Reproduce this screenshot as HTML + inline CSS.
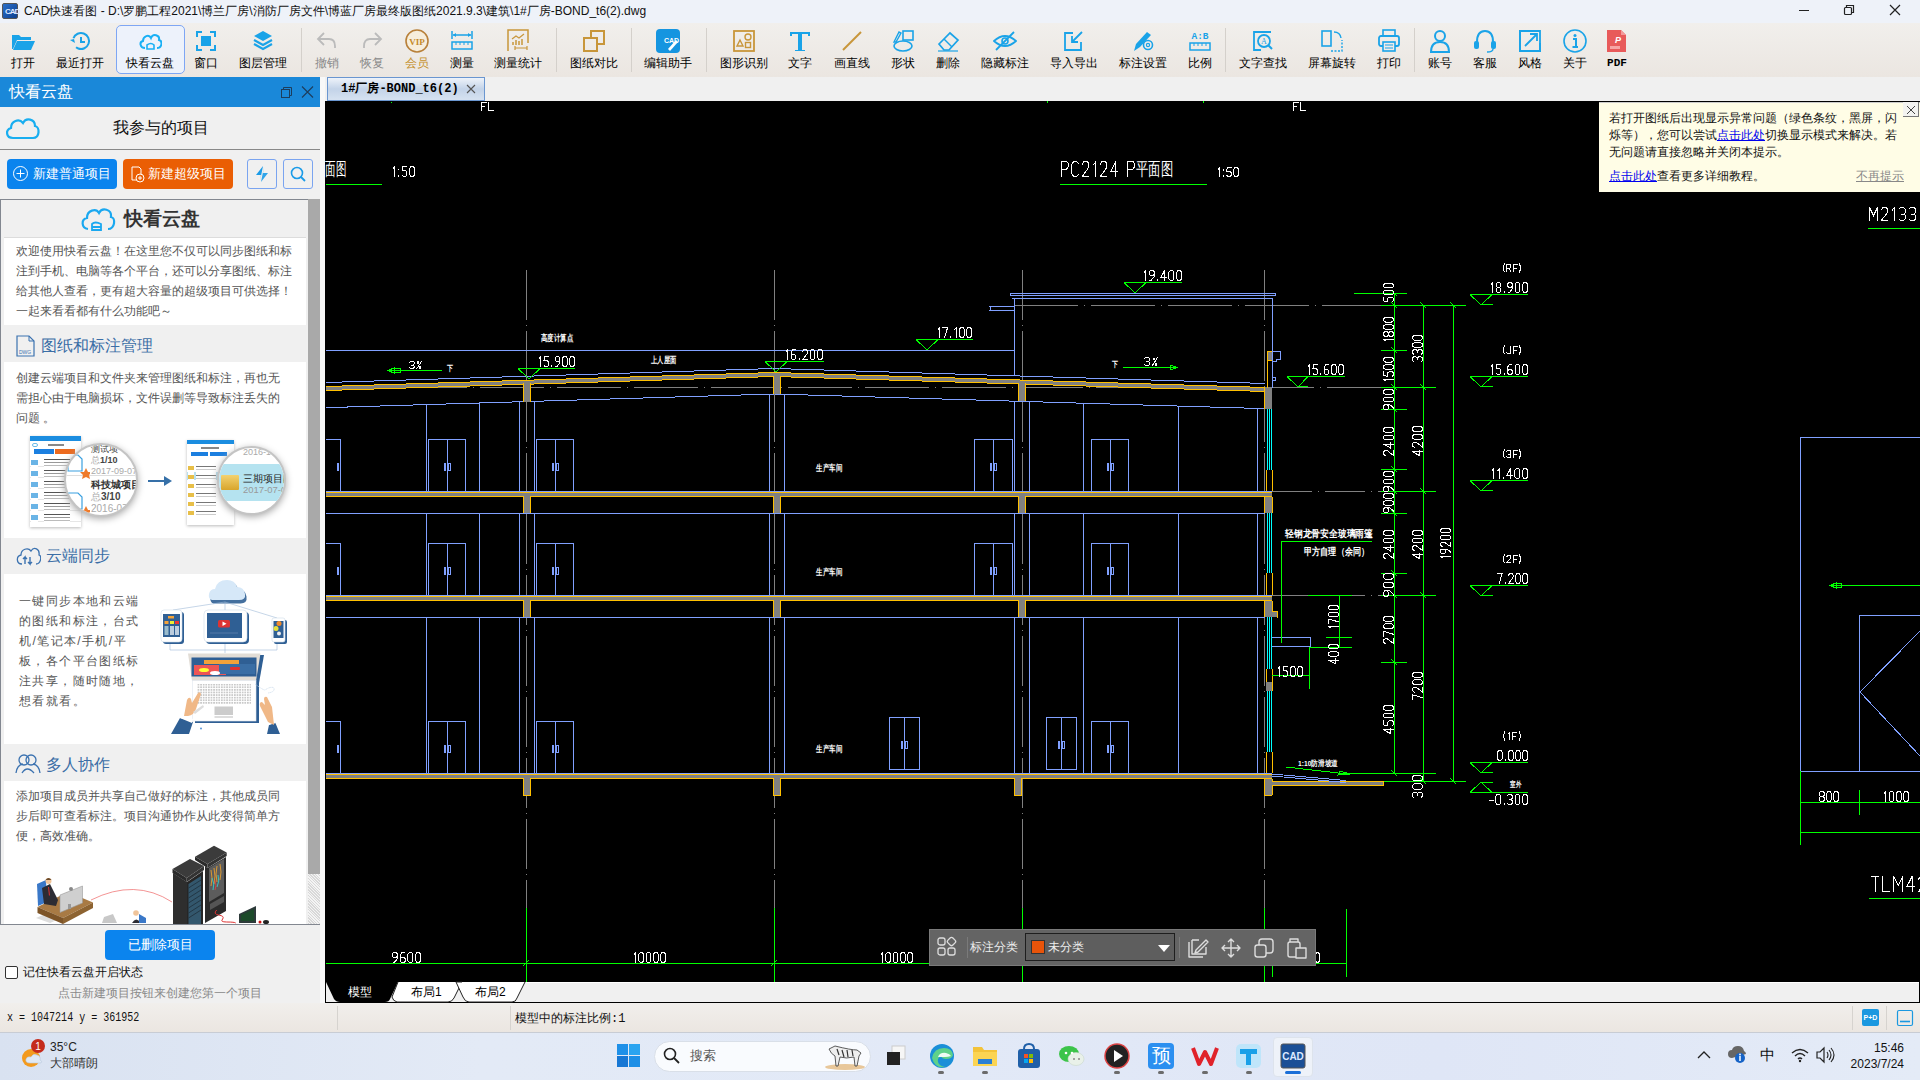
<!DOCTYPE html><html><head><meta charset="utf-8"><style>
*{margin:0;padding:0;box-sizing:border-box}
html,body{width:1920px;height:1080px;overflow:hidden;background:#f0f0f0;font-family:"Liberation Sans",sans-serif;font-size:12px;color:#000;position:relative}
.abs{position:absolute}
.lbl{top:55px;width:100px;text-align:center;font-size:12px;line-height:16px;white-space:nowrap;color:#000}
.ptxt{font-size:12px;line-height:20px;color:#555;white-space:nowrap}
.htxt{font-size:15.5px;line-height:22px;color:#3b6ea6;white-space:nowrap}
</style></head><body>

<div class="abs" style="left:0;top:0;width:1920px;height:23px;background:#eef2f9"></div>
<div class="abs" style="left:2px;top:3px;width:16px;height:16px;background:linear-gradient(135deg,#2a6fc9,#0d3f8f);border-radius:2px;border:1px solid #555"><div style="position:absolute;left:2px;top:3px;font-size:8px;color:#dfe8ff;font-weight:bold;letter-spacing:-1px">CAD</div></div>
<div class="abs" style="left:24px;top:3px;font-size:12px;color:#111;white-space:nowrap;line-height:16px">CAD快速看图 - D:\罗鹏工程2021\博兰厂房\消防厂房文件\博蓝厂房最终版图纸2021.9.3\建筑\1#厂房-BOND_t6(2).dwg</div>
<svg class="abs" style="left:1790px;top:0" width="130" height="23">
<line x1="9" y1="10.5" x2="19" y2="10.5" stroke="#222" stroke-width="1"/>
<rect x="54.5" y="7.5" width="7" height="7" fill="none" stroke="#222" stroke-width="1.2" rx="1"/>
<path d="M56.5 7.5 V5.5 H63.5 V12.5 H61.5" fill="none" stroke="#222" stroke-width="1.2"/>
<path d="M100 5 L110 15 M110 5 L100 15" stroke="#222" stroke-width="1.2"/>
</svg>

<div class="abs" style="left:0;top:23px;width:1920px;height:54px;background:linear-gradient(#f1efec,#ebe6e1)"></div>
<div class="abs" style="left:116px;top:25px;width:69px;height:49px;border:1px solid #7ea6f4;border-radius:5px;background:#edf2fb"></div>
<div class="abs" style="left:11px;top:29px;width:24px;height:24px"><svg width="24" height="24" viewBox="0 0 24 24"><path d="M1 6 h7 l2 2 h10 v3 H6 L2 20 H1z" fill="#1aa3e8"/><path d="M6 12 h18 l-4 9 H2z" fill="#1aa3e8"/></svg></div>
<div class="abs lbl" style="left:-27px;">打开</div>
<div class="abs" style="left:68px;top:29px;width:24px;height:24px"><svg width="24" height="24" viewBox="0 0 24 24"><circle cx="13" cy="12" r="8" fill="none" stroke="#1aa3e8" stroke-width="2" stroke-dasharray="40 10" transform="rotate(200 13 12)"/><path d="M13 8 v5 h4" fill="none" stroke="#1aa3e8" stroke-width="2"/><path d="M2 11 l4 -1 l1 4z" fill="#1aa3e8"/></svg></div>
<div class="abs lbl" style="left:30px;">最近打开</div>
<div class="abs" style="left:138px;top:29px;width:24px;height:24px"><svg width="24" height="24" viewBox="0 0 24 24"><path d="M7 19 C2 19 1 13 5 12 C5 7 11 5 13 9 C15 4 22 6 21 11 C25 12 24 19 19 19" fill="none" stroke="#19b0f5" stroke-width="2"/><path d="M9 20 v-4 q4 -3 7 0 v4z" fill="none" stroke="#19b0f5" stroke-width="1.6"/></svg></div>
<div class="abs lbl" style="left:100px;">快看云盘</div>
<div class="abs" style="left:194px;top:29px;width:24px;height:24px"><svg width="24" height="24" viewBox="0 0 24 24"><rect x="7" y="7" width="10" height="10" fill="#1aa3e8"/><path d="M3 8 V3 H8 M16 3 h5 v5 M21 16 v5 h-5 M8 21 H3 v-5" fill="none" stroke="#1aa3e8" stroke-width="2"/></svg></div>
<div class="abs lbl" style="left:156px;">窗口</div>
<div class="abs" style="left:251px;top:29px;width:24px;height:24px"><svg width="24" height="24" viewBox="0 0 24 24"><path d="M12 2 L21 7 L12 12 L3 7z" fill="#1aa3e8"/><path d="M3 11 L12 16 L21 11 M3 15 L12 20 L21 15" fill="none" stroke="#1aa3e8" stroke-width="2.2"/></svg></div>
<div class="abs lbl" style="left:213px;">图层管理</div>
<div class="abs" style="left:301px;top:28px;width:1px;height:44px;background:#d4d0cb"></div>
<div class="abs" style="left:314.5px;top:29px;width:24px;height:24px"><svg width="24" height="24" viewBox="0 0 24 24"><path d="M9 4 L3 10 L9 16 M3 10 H14 q6 0 6 7 v2" fill="none" stroke="#bbb" stroke-width="1.8"/></svg></div>
<div class="abs lbl" style="left:276.5px;color:#8a8a8a;">撤销</div>
<div class="abs" style="left:359.5px;top:29px;width:24px;height:24px"><svg width="24" height="24" viewBox="0 0 24 24"><path d="M15 4 L21 10 L15 16 M21 10 H10 q-6 0 -6 7 v2" fill="none" stroke="#bbb" stroke-width="1.8"/></svg></div>
<div class="abs lbl" style="left:321.5px;color:#8a8a8a;">恢复</div>
<div class="abs" style="left:404.5px;top:29px;width:24px;height:24px"><svg width="24" height="24" viewBox="0 0 24 24"><circle cx="12" cy="12" r="11" fill="#f7eedc" stroke="#b8803a" stroke-width="1.6"/><text x="12" y="15.5" font-size="9" font-weight="bold" text-anchor="middle" fill="#c58a2a" font-family="Liberation Serif">VIP</text></svg></div>
<div class="abs lbl" style="left:366.5px;color:#c4902c;">会员</div>
<div class="abs" style="left:449.5px;top:29px;width:24px;height:24px"><svg width="24" height="24" viewBox="0 0 24 24"><path d="M2 2 v8 M22 2 v8 M3 6 H21" stroke="#1aa3e8" stroke-width="1.5" fill="none"/><path d="M3 6 l3 -2 v4z M21 6 l-3 -2 v4z" fill="#1aa3e8"/><rect x="2" y="13" width="20" height="7" fill="none" stroke="#1aa3e8" stroke-width="1.5"/><path d="M6 13 v3 M10 13 v3 M14 13 v3 M18 13 v3" stroke="#1aa3e8" stroke-width="1"/></svg></div>
<div class="abs lbl" style="left:411.5px;">测量</div>
<div class="abs" style="left:506px;top:29px;width:24px;height:24px"><svg width="24" height="24" viewBox="0 0 24 24"><path d="M2 22 V1 H22 V14" fill="none" stroke="#c8963a" stroke-width="1.5"/><path d="M6 10 l4 -3 l3 2 l5 -4" stroke="#c8963a" stroke-width="1.2" fill="none"/><path d="M7 16 v-3 M10 16 v-5 M13 16 v-4 M16 16 v-6" stroke="#c8963a" stroke-width="1.5"/><path d="M9 19 H21 M9 17 v4 M21 17 v4" stroke="#c8963a" stroke-width="1.2" fill="none"/></svg></div>
<div class="abs lbl" style="left:468px;">测量统计</div>
<div class="abs" style="left:556px;top:28px;width:1px;height:44px;background:#d4d0cb"></div>
<div class="abs" style="left:581.5px;top:29px;width:24px;height:24px"><svg width="24" height="24" viewBox="0 0 24 24"><rect x="2" y="9" width="13" height="13" fill="none" stroke="#c8963a" stroke-width="2"/><path d="M9 9 V2 H22 V15 H15" fill="none" stroke="#c8963a" stroke-width="2"/></svg></div>
<div class="abs lbl" style="left:543.5px;">图纸对比</div>
<div class="abs" style="left:631px;top:28px;width:1px;height:44px;background:#d4d0cb"></div>
<div class="abs" style="left:656px;top:29px;width:24px;height:24px"><svg width="24" height="24" viewBox="0 0 24 24"><rect x="0" y="0" width="24" height="24" rx="4" fill="#1595e0"/><text x="8" y="14" font-size="7" fill="#fff" font-weight="bold" font-family="Liberation Sans">CAD</text><path d="M12 20 l8 -9 l2 2 l-8 9z" fill="#fff"/></svg></div>
<div class="abs lbl" style="left:618px;">编辑助手</div>
<div class="abs" style="left:706px;top:28px;width:1px;height:44px;background:#d4d0cb"></div>
<div class="abs" style="left:731.5px;top:29px;width:24px;height:24px"><svg width="24" height="24" viewBox="0 0 24 24"><rect x="2" y="2" width="20" height="20" fill="none" stroke="#c8963a" stroke-width="1.8"/><path d="M5 17 L8 11 L11 17z" fill="none" stroke="#c8963a" stroke-width="1.4"/><circle cx="16" cy="8" r="3" fill="none" stroke="#c8963a" stroke-width="1.4"/><rect x="13.5" y="13.5" width="5" height="5" fill="none" stroke="#c8963a" stroke-width="1.4"/></svg></div>
<div class="abs lbl" style="left:693.5px;">图形识别</div>
<div class="abs" style="left:788px;top:29px;width:24px;height:24px"><svg width="24" height="24" viewBox="0 0 24 24"><path d="M2 3 H22 V7 H20 V5 H14 V21 H17 V22 H7 V21 H10 V5 H4 V7 H2z" fill="#1aa3e8"/></svg></div>
<div class="abs lbl" style="left:750px;">文字</div>
<div class="abs" style="left:839.5px;top:29px;width:24px;height:24px"><svg width="24" height="24" viewBox="0 0 24 24"><path d="M3 21 L21 3" stroke="#c8963a" stroke-width="2"/></svg></div>
<div class="abs lbl" style="left:801.5px;">画直线</div>
<div class="abs" style="left:890.5px;top:29px;width:24px;height:24px"><svg width="24" height="24" viewBox="0 0 24 24"><rect x="12" y="2" width="10" height="9" fill="none" stroke="#1aa3e8" stroke-width="1.6"/><ellipse cx="12" cy="17" rx="9" ry="5" fill="none" stroke="#1aa3e8" stroke-width="1.6"/><path d="M3 13 L8 3 l2 1 l-5 9z" fill="none" stroke="#1aa3e8" stroke-width="1.4"/></svg></div>
<div class="abs lbl" style="left:852.5px;">形状</div>
<div class="abs" style="left:935.5px;top:29px;width:24px;height:24px"><svg width="24" height="24" viewBox="0 0 24 24"><path d="M3 15 L14 4 L22 11 L13 21 H8z" fill="none" stroke="#1aa3e8" stroke-width="1.7"/><path d="M8 10 L16 18" stroke="#1aa3e8" stroke-width="1.5"/><path d="M2 22 H22" stroke="#1aa3e8" stroke-width="1.2"/></svg></div>
<div class="abs lbl" style="left:897.5px;">删除</div>
<div class="abs" style="left:992.5px;top:29px;width:24px;height:24px"><svg width="24" height="24" viewBox="0 0 24 24"><path d="M1 12 Q12 2 23 12 Q12 22 1 12z" fill="none" stroke="#1aa3e8" stroke-width="1.8"/><circle cx="12" cy="12" r="3" fill="none" stroke="#1aa3e8" stroke-width="1.6"/><path d="M3 21 L21 3" stroke="#1aa3e8" stroke-width="1.8"/></svg></div>
<div class="abs lbl" style="left:954.5px;">隐藏标注</div>
<div class="abs" style="left:1061.5px;top:29px;width:24px;height:24px"><svg width="24" height="24" viewBox="0 0 24 24"><path d="M11 4 H3 V21 H19 V13" fill="none" stroke="#1aa3e8" stroke-width="1.8"/><path d="M20 3 L10 13 M10 7 v6 h6" fill="none" stroke="#1aa3e8" stroke-width="1.8"/></svg></div>
<div class="abs lbl" style="left:1023.5px;">导入导出</div>
<div class="abs" style="left:1130.5px;top:29px;width:24px;height:24px"><svg width="24" height="24" viewBox="0 0 24 24"><path d="M3 22 L5 15 L16 3 l4 3 L9 18z" fill="#1aa3e8"/><circle cx="17" cy="16" r="4.5" fill="#f0ece9" stroke="#1aa3e8" stroke-width="1.6"/><circle cx="17" cy="16" r="1.6" fill="none" stroke="#1aa3e8" stroke-width="1.2"/></svg></div>
<div class="abs lbl" style="left:1092.5px;">标注设置</div>
<div class="abs" style="left:1187.5px;top:29px;width:24px;height:24px"><svg width="24" height="24" viewBox="0 0 24 24"><text x="12" y="10" font-size="9.5" text-anchor="middle" fill="#1aa3e8" font-weight="bold" font-family="Liberation Mono">A:B</text><rect x="2" y="14" width="20" height="7" fill="none" stroke="#1aa3e8" stroke-width="1.5"/><path d="M6 14 v3 M10 14 v3 M14 14 v3 M18 14 v3" stroke="#1aa3e8" stroke-width="1"/></svg></div>
<div class="abs lbl" style="left:1149.5px;">比例</div>
<div class="abs" style="left:1225px;top:28px;width:1px;height:44px;background:#d4d0cb"></div>
<div class="abs" style="left:1250.5px;top:29px;width:24px;height:24px"><svg width="24" height="24" viewBox="0 0 24 24"><path d="M20 3 H3 V21 H10" fill="none" stroke="#1aa3e8" stroke-width="1.8"/><circle cx="13" cy="12" r="6" fill="none" stroke="#1aa3e8" stroke-width="1.8"/><text x="13" y="15" font-size="8" text-anchor="middle" fill="#1aa3e8" font-family="Liberation Serif">A</text><path d="M17 16 L21 20" stroke="#1aa3e8" stroke-width="2"/></svg></div>
<div class="abs lbl" style="left:1212.5px;">文字查找</div>
<div class="abs" style="left:1319.5px;top:29px;width:24px;height:24px"><svg width="24" height="24" viewBox="0 0 24 24"><rect x="2" y="2" width="9" height="15" fill="none" stroke="#1aa3e8" stroke-width="1.6"/><path d="M11 22 H22 V11" fill="none" stroke="#1aa3e8" stroke-width="1.4" stroke-dasharray="2 1.5"/><path d="M14 3 q6 0 7 6" fill="none" stroke="#1aa3e8" stroke-width="1.4"/></svg></div>
<div class="abs lbl" style="left:1281.5px;">屏幕旋转</div>
<div class="abs" style="left:1376.5px;top:29px;width:24px;height:24px"><svg width="24" height="24" viewBox="0 0 24 24"><rect x="6" y="1" width="12" height="6" fill="none" stroke="#1aa3e8" stroke-width="1.6"/><rect x="2" y="7" width="20" height="10" rx="2" fill="none" stroke="#1aa3e8" stroke-width="1.8"/><rect x="6" y="13" width="12" height="9" fill="#f0ece9" stroke="#1aa3e8" stroke-width="1.6"/><path d="M8 16 h8 M8 19 h8" stroke="#1aa3e8" stroke-width="1"/></svg></div>
<div class="abs lbl" style="left:1338.5px;">打印</div>
<div class="abs" style="left:1414px;top:28px;width:1px;height:44px;background:#d4d0cb"></div>
<div class="abs" style="left:1427.5px;top:29px;width:24px;height:24px"><svg width="24" height="24" viewBox="0 0 24 24"><circle cx="12" cy="7" r="5" fill="none" stroke="#1aa3e8" stroke-width="2"/><path d="M3 23 q0 -10 9 -10 q9 0 9 10z" fill="none" stroke="#1aa3e8" stroke-width="2"/></svg></div>
<div class="abs lbl" style="left:1389.5px;">账号</div>
<div class="abs" style="left:1472.5px;top:29px;width:24px;height:24px"><svg width="24" height="24" viewBox="0 0 24 24"><path d="M4 13 q0 -11 8 -11 q8 0 8 11" fill="none" stroke="#1aa3e8" stroke-width="2"/><rect x="1" y="12" width="5" height="8" rx="2" fill="#1aa3e8"/><rect x="18" y="12" width="5" height="8" rx="2" fill="#1aa3e8"/><path d="M20 20 q0 3 -6 3" fill="none" stroke="#1aa3e8" stroke-width="1.4"/></svg></div>
<div class="abs lbl" style="left:1434.5px;">客服</div>
<div class="abs" style="left:1517.5px;top:29px;width:24px;height:24px"><svg width="24" height="24" viewBox="0 0 24 24"><path d="M10 2 H2 V22 H22 V14" fill="none" stroke="#1aa3e8" stroke-width="1.8"/><path d="M2 22 V2 H22 V22z" fill="none" stroke="#1aa3e8" stroke-width="1.8"/><path d="M7 17 L19 5 M12 5 h7 v7" fill="none" stroke="#1aa3e8" stroke-width="1.8"/></svg></div>
<div class="abs lbl" style="left:1479.5px;">风格</div>
<div class="abs" style="left:1562.5px;top:29px;width:24px;height:24px"><svg width="24" height="24" viewBox="0 0 24 24"><circle cx="12" cy="12" r="11" fill="none" stroke="#1aa3e8" stroke-width="1.6"/><circle cx="12" cy="6.5" r="1.5" fill="#1aa3e8"/><path d="M10 10 h3 v8 h2 M9.5 18 h5" stroke="#1aa3e8" stroke-width="2" fill="none"/></svg></div>
<div class="abs lbl" style="left:1524.5px;">关于</div>
<div class="abs" style="left:1605px;top:29px;width:24px;height:24px"><svg width="24" height="24" viewBox="0 0 24 24"><path d="M2 1 H16 L21 6 V23 H2z" fill="#e85a5a"/><path d="M16 1 V6 H21" fill="#f49a9a"/><text x="10" y="14" font-size="9" fill="#fff" font-weight="bold" font-style="italic" font-family="Liberation Sans">P</text><rect x="5" y="17" width="10" height="3" fill="#f6a5a5"/></svg></div>
<div class="abs lbl" style="left:1567px;font-family:'Liberation Mono',monospace;font-weight:bold;font-size:11px;">PDF</div>

<div class="abs" style="left:0;top:77px;width:320px;height:926px;background:#f0f0f0"></div>
<div class="abs" style="left:320px;top:77px;width:5px;height:926px;background:#f8f8f8"></div>
<div class="abs" style="left:0;top:77px;width:320px;height:30px;background:#1a88d9"></div>
<div class="abs" style="left:9px;top:81px;font-size:16px;color:#fff;line-height:22px">快看云盘</div>
<svg class="abs" style="left:278px;top:84px" width="40" height="16">
<rect x="3.5" y="5.5" width="8" height="8" fill="none" stroke="#1d3d5c" stroke-width="1"/><path d="M5.5 5.5 V3.5 H13.5 V11.5 H11.5" fill="none" stroke="#1d3d5c" stroke-width="1"/>
<path d="M24 2.5 L35 13.5 M35 2.5 L24 13.5" stroke="#1d3d5c" stroke-width="1.1"/>
</svg>
<svg class="abs" style="left:4px;top:114px" width="36" height="28"><path d="M9 24 C2 24 1 16 7 14 C7 7 15 4 19 9 C22 3 31 5 31 12 C36 13 36 24 29 24z" fill="none" stroke="#19aef0" stroke-width="2.2"/></svg>
<div class="abs" style="left:113px;top:117px;font-size:16px;color:#111;line-height:22px">我参与的项目</div>
<div class="abs" style="left:0;top:149px;width:320px;height:1px;background:#888"></div>
<div class="abs btn" style="left:7px;top:159px;width:110px;height:30px;background:#0b84ee;border-radius:4px"></div>
<svg class="abs" style="left:12px;top:165px" width="18" height="18"><circle cx="8.5" cy="8.5" r="7" fill="none" stroke="#fff" stroke-width="1"/><path d="M8.5 4.5 v8 M4.5 8.5 h8" stroke="#fff" stroke-width="1"/></svg>
<div class="abs" style="left:33px;top:165px;font-size:13px;color:#fff;line-height:18px">新建普通项目</div>
<div class="abs" style="left:123px;top:159px;width:110px;height:30px;background:#ea5e04;border-radius:4px"></div>
<svg class="abs" style="left:129px;top:165px" width="18" height="18"><path d="M3 2 H10 L12 4 V15 H3z" fill="none" stroke="#fff" stroke-width="1"/><circle cx="11" cy="13" r="4" fill="#ea5e04" stroke="#fff" stroke-width="1"/><path d="M11 11 v4 M9 13 h4" stroke="#fff" stroke-width="1"/></svg>
<div class="abs" style="left:148px;top:165px;font-size:13px;color:#fff;line-height:18px">新建超级项目</div>
<div class="abs" style="left:247px;top:159px;width:30px;height:30px;border:1px solid #7aa4f0;border-radius:3px;background:#f0f0f0"></div>
<svg class="abs" style="left:252px;top:164px" width="20" height="20"><path d="M11 2 L4 11 H9 L8 17z" fill="#1a9be8"/><path d="M9 18 L16 9 H11 L12 3z" fill="#1a9be8" opacity="0.9"/></svg>
<div class="abs" style="left:283px;top:159px;width:30px;height:30px;border:1px solid #7aa4f0;border-radius:3px;background:#f0f0f0"></div>
<svg class="abs" style="left:288px;top:164px" width="20" height="20"><circle cx="9" cy="9" r="5.5" fill="none" stroke="#1a9be8" stroke-width="1.6"/><path d="M13 13 L17 17" stroke="#1a9be8" stroke-width="1.8"/></svg>
<!-- content frame -->
<div class="abs" style="left:0;top:199px;width:320px;height:726px;border:1px solid #828790;border-right:none;background:#f0f0f0"></div>
<div class="abs" style="left:308px;top:199px;width:12px;height:675px;background:#a9a9a9"></div>
<div class="abs" style="left:308px;top:874px;width:12px;height:50px;background:repeating-linear-gradient(45deg,#d8d8d8 0 1px,#f4f4f4 1px 2px)"></div>
<div class="abs" style="left:4px;top:237px;width:302px;height:1px;background:#dcdcdc"></div>
<svg class="abs" style="left:80px;top:204px" width="36" height="28"><path d="M8 25 C1 24 1 15 7 14 C7 6 16 4 19 9 C22 3 32 5 31 13 C36 14 35 25 28 25" fill="none" stroke="#1aa8f0" stroke-width="2.2"/><path d="M12 26 v-6 q3 -3 9 0 v6z M12 23 h9" fill="none" stroke="#1aa8f0" stroke-width="1.8"/></svg>
<div class="abs" style="left:124px;top:207px;font-size:19px;color:#333;font-weight:bold;line-height:24px">快看云盘</div>
<div class="abs" style="left:4px;top:238px;width:302px;height:87px;background:#fff"></div>
<div class="abs ptxt" style="left:16px;top:241px;width:288px">欢迎使用快看云盘！在这里您不仅可以同步图纸和标<br>注到手机、电脑等各个平台，还可以分享图纸、标注<br>给其他人查看，更有超大容量的超级项目可供选择！<br>一起来看看都有什么功能吧～</div>
<svg class="abs" style="left:15px;top:335px" width="22" height="22"><path d="M2 1 H14 L19 6 V21 H2z" fill="none" stroke="#3b72b0" stroke-width="1.2"/><path d="M14 1 V6 H19" fill="none" stroke="#3b72b0" stroke-width="1"/><text x="4" y="19" font-size="5" fill="#3b72b0" font-family="Liberation Sans">DWG</text></svg>
<div class="abs htxt" style="left:41px;top:335px">图纸和标注管理</div>
<div class="abs" style="left:4px;top:362px;width:302px;height:176px;background:#fff"></div>
<div class="abs ptxt" style="left:16px;top:368px;width:288px">创建云端项目和文件夹来管理图纸和标注，再也无<br>需担心由于电脑损坏，文件误删等导致标注丢失的<br>问题 。</div>
<!-- illustration 1 -->
<div class="abs" style="left:30px;top:436px;width:51px;height:91px;background:#fff;box-shadow:0 1px 3px #bbb;overflow:hidden">
<div style="position:absolute;left:0;top:0;width:51px;height:5px;background:#1b8de0"></div>
<div style="position:absolute;left:2px;top:7px;width:6px;height:4px;border:1px solid #6bbbe8;border-radius:3px"></div>
<div style="position:absolute;left:18px;top:8px;width:16px;height:2px;background:#888"></div>
<div style="position:absolute;left:4px;top:13px;width:20px;height:5px;background:#1b7fe0"></div>
<div style="position:absolute;left:25px;top:13px;width:20px;height:5px;background:#ec6a1e"></div>
<div style="position:absolute;left:0;top:20px;width:51px;height:71px;background:repeating-linear-gradient(#fff 0 10px,#e6e6e6 10px 11px)"></div>
<div style="position:absolute;left:1px;top:22px;width:7px;height:66px;background:repeating-linear-gradient(#fff 0 2px,#6ab4e6 2px 7px,#fff 7px 11px)"></div>
<div style="position:absolute;left:14px;top:22px;width:26px;height:66px;background:repeating-linear-gradient(#fff 0 1px,#555 1px 2px,#fff 2px 4px,#999 4px 5px,#fff 5px 7px,#bbb 7px 8px,#fff 8px 11px)"></div>
</div>
<div class="abs" style="left:64px;top:443px;width:74px;height:74px;border-radius:50%;background:#fff;border:2px solid #c4c4c4;box-shadow:0 2px 7px #aaa;overflow:hidden">
<div style="position:absolute;left:0;top:30px;width:74px;height:1px;background:#ddd"></div>
<svg style="position:absolute;left:0;top:4px" width="24" height="66"><path d="M2 6 h10 l4 4 v12 h-14z M2 44 h10 l4 4 v12 h-14z" fill="none" stroke="#3aa0e0" stroke-width="1.2"/><path d="M18 23 l2 -4 l2 4 l4 0 l-3 3 l1 4 l-4 -2 l-4 2 l1 -4 l-3 -3z M18 61 l2 -4 l2 4 l4 0 l-3 3 l1 4 l-4 -2 l-4 2 l1 -4 l-3 -3z" fill="#ee7a2a"/></svg>
<div style="position:absolute;left:25px;top:-1px;font-size:9px;line-height:11px;white-space:nowrap;color:#555"><span style="color:#444">测试项</span><br><span style="color:#aaa">总</span><b style="color:#444">1/10</b><br><span style="color:#aaa">2017-09-07 1</span></div>
<div style="position:absolute;left:25px;top:34px;font-size:10px;line-height:12px;white-space:nowrap;color:#555"><b style="color:#333">科技城项目</b><br><span style="color:#aaa">总</span><b style="color:#444">3/10</b><br><span style="color:#aaa">2016-07-1</span></div>
</div>
<svg class="abs" style="left:146px;top:474px" width="28" height="14"><path d="M2 7 H20" stroke="#3670a8" stroke-width="2"/><path d="M18 2 L26 7 L18 12z" fill="#3670a8"/></svg>
<div class="abs" style="left:187px;top:440px;width:47px;height:85px;background:#fff;box-shadow:0 1px 3px #bbb;overflow:hidden">
<div style="position:absolute;left:0;top:0;width:47px;height:4px;background:#1b8de0"></div>
<div style="position:absolute;left:14px;top:7px;width:18px;height:2px;background:#888"></div>
<div style="position:absolute;left:4px;top:12px;width:17px;height:4px;background:#1b7fe0"></div>
<div style="position:absolute;left:23px;top:12px;width:17px;height:4px;background:#1b7fe0"></div>
<div style="position:absolute;left:0;top:32px;width:47px;height:8px;background:#b8e0ef"></div>
<div style="position:absolute;left:1px;top:24px;width:6px;height:56px;background:repeating-linear-gradient(#fff 0 2px,#e8bf48 2px 6px,#fff 6px 9px)"></div>
<div style="position:absolute;left:9px;top:24px;width:20px;height:56px;background:repeating-linear-gradient(#fff 0 2px,#777 2px 3px,#fff 3px 5px,#ccc 5px 6px,#fff 6px 9px)"></div>
</div>
<div class="abs" style="left:217px;top:446px;width:69px;height:69px;border-radius:50%;background:#fff;border:2px solid #c4c4c4;box-shadow:0 2px 7px #aaa;overflow:hidden">
<div style="position:absolute;left:0;top:16px;width:69px;height:37px;background:#b5e3f0"></div>
<div style="position:absolute;left:24px;top:-1px;font-size:9px;color:#aaa;white-space:nowrap">2016-11</div>
<div style="position:absolute;left:2px;top:27px;width:18px;height:15px;background:linear-gradient(#f2d270,#d8a52c);border-radius:1px"></div>
<div style="position:absolute;left:24px;top:25px;font-size:9.5px;color:#222;white-space:nowrap;line-height:11px">三期项目图纸<br><span style="color:#999">2017-07-07</span></div>
</div>
<svg class="abs" style="left:15px;top:545px" width="26" height="22"><path d="M7 19 C1 19 1 11 6 10 C6 4 13 2 16 6 C19 1 25 4 24 10 C27 11 26 19 21 19" fill="none" stroke="#3b72b0" stroke-width="1.3"/><path d="M10 19 v-7 l-2 2 M10 12 l2 2 M15 12 v7 l-2 -2 M15 19 l2 -2" stroke="#3b72b0" stroke-width="1.4" fill="none"/></svg>
<div class="abs htxt" style="left:46px;top:545px">云端同步</div>
<div class="abs" style="left:4px;top:574px;width:302px;height:170px;background:#fff"></div>
<div class="abs ptxt" style="left:19px;top:591px;width:130px;letter-spacing:1.4px">一键同步本地和云端<br>的图纸和标注，台式<br>机/笔记本/手机/平<br>板，各个平台图纸标<br>注共享，随时随地，<br>想看就看。</div>
<!-- sync illustration -->
<svg class="abs" style="left:155px;top:575px" width="140" height="165" viewBox="155 575 140 165">
<path d="M212 602 q-4 -1 -3 -7 q1 -5 6 -5 q2 -9 12 -9 q8 0 10 7 q7 0 8 7 q1 7 -6 7z" fill="#2f5f94" opacity="0.9" transform="translate(1.5 1.5)"/>
<path d="M212 600 q-4 -1 -3 -6 q1 -5 6 -5 q2 -9 12 -9 q8 0 10 7 q7 0 8 7 q1 6 -6 6z" fill="#d6e8f8"/>
<path d="M225 602 L173 610 M225 602 V611 M225 602 L277 618 M170 642 V650 H277 V642 M225 642 V653" fill="none" stroke="#9fbbd8" stroke-width="0.6"/>
<rect x="163" y="612" width="21" height="32" rx="3" fill="#2f5f94"/><rect x="161" y="610" width="21" height="32" rx="3" fill="#fff" stroke="#cfdcea" stroke-width="0.6"/><rect x="163" y="614" width="17" height="23" fill="#2f5f94"/>
<rect x="168" y="616" width="6" height="2.5" fill="#f2a23a"/><rect x="164.5" y="621" width="4" height="3" fill="#f2a23a"/><rect x="170" y="621" width="4" height="3" fill="#ee3"/><rect x="175" y="621" width="4" height="3" fill="#e33"/><rect x="164.5" y="626" width="4" height="9" fill="#9bc"/><rect x="170" y="626" width="4" height="9" fill="#bcd"/><rect x="175" y="626" width="4" height="9" fill="#bcd"/>
<rect x="206" y="612" width="43" height="32" rx="4" fill="#2f5f94"/><rect x="204" y="610" width="43" height="32" rx="4" fill="#fff" stroke="#cfdcea" stroke-width="0.6"/><rect x="207" y="613" width="35" height="25" fill="#2f5f94"/>
<rect x="218" y="620" width="12" height="7.5" rx="1.5" fill="#d33"/><path d="M222.5 621.5 l4 2.3 l-4 2.3z" fill="#fff"/><path d="M210 633 h28" stroke="#6c8fb5" stroke-width="0.6"/>
<rect x="274" y="620" width="13" height="24" rx="2" fill="#2f5f94"/><rect x="272" y="618" width="13" height="24" rx="2" fill="#fff" stroke="#cfdcea" stroke-width="0.6"/><rect x="273.5" y="621" width="10" height="17" fill="#2f5f94"/><circle cx="279" cy="623.5" r="2.5" fill="#f08a2a"/><circle cx="276" cy="628.5" r="2.5" fill="#e8e03a"/><circle cx="279" cy="633.5" r="2" fill="#eee"/>
<path d="M190 654 H262 L257 682 H195z" fill="#2f5f94" transform="translate(2 1)"/>
<path d="M188 653.5 H260.5 L256 681 H192z" fill="#e2ddd6"/><rect x="191.5" y="657.5" width="65" height="19" fill="#2f5f94"/><rect x="204" y="660" width="35" height="4" fill="#f2a23a"/><rect x="194" y="665" width="32" height="10" fill="#e55"/><rect x="219" y="664" width="36" height="10" fill="#3a6ea5"/><rect x="230" y="667" width="10" height="3" rx="1" fill="#d33"/><ellipse cx="204" cy="670" rx="5" ry="2" fill="#ff3"/><ellipse cx="215" cy="673" rx="5" ry="2" fill="#fff"/>
<path d="M193 681 H257 V722 H193z" fill="#2f5f94" transform="translate(2 1)"/>
<rect x="192.5" y="680.5" width="63.5" height="40.5" fill="#fff" stroke="#dfe6ee" stroke-width="0.6"/>
<rect x="197" y="684" width="54" height="20" fill="url(#kb)"/>
<defs><pattern id="kb" width="2.6" height="2.6" patternUnits="userSpaceOnUse"><rect width="1.7" height="1.7" fill="#c8c8c8"/></pattern></defs>
<rect x="214.5" y="706.5" width="18.5" height="8.5" fill="#ccc"/><rect x="214.5" y="716" width="18.5" height="2" fill="#ddd"/>
<path d="M255 684 q8 6 10 6 q6 -4 9 -2 q1 4 -6 5" fill="none" stroke="#c6d8ea" stroke-width="0.8" stroke-dasharray="1 0.6"/>
<path d="M171 734 L180 718 L193 722 L189 734z" fill="#2f5f94"/><path d="M180 718 l4 -3 l9 4 l-1 4z" fill="#fff"/>
<path d="M184 716 L187 700 q2 -4 4 -1 l1 4 l6 -10 q2 -2 3 1 l-5 15 q-2 6 -8 7z" fill="#f0b887"/><path d="M193 712 L203 705 l1 2 l-9 7z" fill="#ddd"/>
<path d="M280 734 L275 722 L269 725 L267 734z" fill="#2f5f94"/><path d="M269 725 l-1 -3 l7 -2 l1 3z" fill="#fff"/>
<path d="M268 722 L260 706 q-1 -4 2 -4 l3 3 l-1 -6 q0 -3 3 -2 l5 10 l2 18z" fill="#f0b887"/>
<circle cx="201" cy="728.5" r="0.9" fill="#4a8ad0"/>
</svg>
<svg class="abs" style="left:15px;top:752px" width="26" height="24"><circle cx="9" cy="8" r="5" fill="none" stroke="#3b72b0" stroke-width="1.3"/><circle cx="16" cy="8" r="5" fill="none" stroke="#3b72b0" stroke-width="1.3"/><path d="M1 21 q1 -8 7 -9 M25 21 q-1 -8 -7 -9 M7 21 q5 -8 12 0" fill="none" stroke="#3b72b0" stroke-width="1.3"/></svg>
<div class="abs htxt" style="left:46px;top:754px">多人协作</div>
<div class="abs" style="left:4px;top:781px;width:302px;height:143px;background:#fff"></div>
<div class="abs ptxt" style="left:16px;top:786px;width:288px">添加项目成员并共享自己做好的标注，其他成员同<br>步后即可查看标注。项目沟通协作从此变得简单方<br>便，高效准确。</div>
<svg class="abs" style="left:30px;top:843px" width="250" height="81" viewBox="30 843 250 81">
<path d="M36 918 L52 911 L66 916 L50 923z" fill="#ddd"/>
<path d="M91 900 Q135 878 172 902" fill="none" stroke="#e66" stroke-width="0.7"/>
<path d="M37.5 907 L68 892 L93 902.5 L63 918z" fill="#a87a44"/><path d="M37.5 907 V913 L63 924 V918z" fill="#7d5427"/><path d="M63 918 L93 902.5 V908 L63 924z" fill="#8d6331"/>
<path d="M37 884 L46 880 L47 902 L38 906z" fill="#3a78c8"/>
<path d="M42 888 L50 884 L58 900 L56 906 L44 904z" fill="#2c2c33"/><path d="M48 887 l1 0 l1 8 l-1 1z" fill="#c33"/>
<circle cx="48.5" cy="881" r="3" fill="#f0c49a"/><path d="M45.5 880 q3 -4 6 0z" fill="#6a4a2a"/>
<path d="M60 895 L82.5 886 L82.5 903 L60 912.5z" fill="#cfcfcf" stroke="#9a9a9a" stroke-width="0.6"/><rect x="68" y="904" width="3" height="5" fill="#999"/>
<circle cx="71" cy="889" r="2" fill="#888"/>
<path d="M102 923 L104 917 L113 914 L117 923z" fill="#c8c8c8"/>
<circle cx="136" cy="913" r="2.8" fill="#f0c49a"/><path d="M132 923 q4 -7 9 0z" fill="#2c2c33"/><path d="M139 914 l7 4 v5 h-7z" fill="#3a78c8"/>
<path d="M172.5 869 L190 859 L204 866 L186.7 878z" fill="#3b3b3b"/><path d="M172.5 869 V873 L186.7 882 V878z" fill="#2a2a2a"/><path d="M186.7 878 L204 866 V870 L186.7 882z" fill="#333"/>
<path d="M173 873 L187 882 V924 H173z" fill="#2e2e2e"/><path d="M187 882 L203 871 V924 H187z" fill="#262626"/>
<path d="M188.5 884 L201 876 V924 H188.5z" fill="#36607a" opacity="0.85"/><path d="M188.5 888 L201 880 M188.5 893 L201 885 M188.5 898 L201 890 M188.5 903 L201 895 M188.5 908 L201 900 M188.5 913 L201 905 M188.5 918 L201 910" stroke="#1e2e3a" stroke-width="0.8"/>
<path d="M195 856.7 L214 845.8 L226.7 852.5 L207.5 864z" fill="#3b3b3b"/><path d="M195 856.7 V860 L207.5 868 V864z" fill="#2a2a2a"/><path d="M207.5 864 L226.7 852.5 V856 L207.5 868z" fill="#333"/>
<path d="M205 866 L207.5 868 L226 857 V911 L205 923z" fill="#2b2b2b"/>
<path d="M209 868 L224 859 V893 L209 902z" fill="#eee" opacity="0.25"/>
<path d="M211 870 q2 8 0 16 M214 868 q2 8 0 16 M217 866 q-2 8 0 16 M220 864 q2 8 0 16" fill="none" stroke="#e8a030" stroke-width="0.9"/><path d="M212 878 q3 6 1 12 M218 875 q2 6 -1 12" fill="none" stroke="#3cc" stroke-width="0.9"/><path d="M215 880 q2 6 0 10" fill="none" stroke="#d44" stroke-width="0.9"/>
<path d="M210 904 L224 896 V902 L210 910z" fill="#555"/>
<path d="M216.7 910 q-4 4 2 5 q6 1 4 4 q-3 3 4 3 q8 0 9 1" fill="none" stroke="#d33" stroke-width="1"/>
<path d="M239 914 L256 906 V923 H239z" fill="#2d3a3a"/><path d="M241 915 L254 909 V921 H241z" fill="#1c4a2a"/>
<circle cx="260" cy="922" r="1.5" fill="#c11"/><ellipse cx="266" cy="922" rx="3" ry="2" fill="#222"/>
</svg>
<div class="abs" style="left:105px;top:930px;width:110px;height:30px;background:#0b84ee;border-radius:4px;color:#fff;font-size:13px;line-height:30px;text-align:center">已删除项目</div>
<div class="abs" style="left:5px;top:966px;width:13px;height:13px;border:1px solid #333;border-radius:2px;background:#fff"></div>
<div class="abs" style="left:23px;top:964px;font-size:12px;color:#111;line-height:17px">记住快看云盘开启状态</div>
<div class="abs" style="left:58px;top:985px;font-size:12px;color:#8a8a8a;line-height:17px">点击新建项目按钮来创建您第一个项目</div>


<div class="abs" style="left:325px;top:77px;width:1595px;height:24px;background:#f0f0f0"></div>
<div class="abs" style="left:327px;top:77px;width:158px;height:24px;border:1px solid #6a96d0;background:linear-gradient(#eef3fa,#c3d3e8 50%,#d6e2f1)"></div>
<div class="abs" style="left:341px;top:81px;font-size:12px;font-family:'Liberation Mono',monospace;font-weight:bold;color:#000;line-height:17px;white-space:nowrap">1#厂房-BOND_t6(2)</div>
<svg class="abs" style="left:465px;top:83px" width="12" height="12"><path d="M2 2 L10 10 M10 2 L2 10" stroke="#555" stroke-width="1.1"/></svg>

<svg class="abs" style="left:325px;top:101px" width="1595" height="881" viewBox="325 101 1595 881" shape-rendering="crispEdges" text-rendering="optimizeSpeed"><rect x="325" y="101" width="1595" height="881" fill="#000"/><line x1="526.5" y1="270" x2="526.5" y2="908" stroke="#808080" stroke-width="1" stroke-dasharray="50 5 1 5"/>
<line x1="774.5" y1="270" x2="774.5" y2="908" stroke="#808080" stroke-width="1" stroke-dasharray="50 5 1 5"/>
<line x1="1022.5" y1="270" x2="1022.5" y2="908" stroke="#808080" stroke-width="1" stroke-dasharray="50 5 1 5"/>
<line x1="1264.5" y1="270" x2="1264.5" y2="908" stroke="#808080" stroke-width="1" stroke-dasharray="50 5 1 5"/>
<line x1="326" y1="387.5" x2="1381" y2="387.5" stroke="#808080" stroke-width="1" stroke-dasharray="64 6 1 6"/>
<line x1="1014" y1="305.5" x2="1381" y2="305.5" stroke="#808080" stroke-width="1" stroke-dasharray="64 6 1 6"/>
<line x1="1272" y1="491.5" x2="1381" y2="491.5" stroke="#808080" stroke-width="1" stroke-dasharray="40 6 1 6"/>
<line x1="1272" y1="595.5" x2="1381" y2="595.5" stroke="#808080" stroke-width="1" stroke-dasharray="40 6 1 6"/>
<path d="M326 386.0 L774 372.0 L1265 386.9755 L1265 391.4755 L774 376.5 L326 390.5z" fill="#808080"/>
<path d="M326 386.5 L774 372.5 L1265 387.4755" fill="none" stroke="#ffc000" stroke-width="1"/>
<path d="M326 390.5 L774 376.5 L1265 391.4755" fill="none" stroke="#ffc000" stroke-width="1"/>
<path d="M326 382.5 L774 368.5 L1014 375.82 L1265 383.4755" fill="none" stroke="#80a0ff" stroke-width="1"/>
<path d="M326 407.664 L774 394.0 L1265 408.6318" fill="none" stroke="#80a0ff" stroke-width="1"/>
<rect x="523.5" y="383.21875" width="7" height="18.314750000000004" fill="#808080"/>
<line x1="523.5" y1="383.21875" x2="523.5" y2="401.5335" stroke="#ffc000" stroke-width="1" />
<line x1="530.5" y1="383.21875" x2="530.5" y2="401.5335" stroke="#ffc000" stroke-width="1" />
<rect x="773.5" y="375.5915" width="7" height="18.497900000000016" fill="#808080"/>
<line x1="773.5" y1="375.5915" x2="773.5" y2="394.0894" stroke="#ffc000" stroke-width="1" />
<line x1="780.5" y1="375.5915" x2="780.5" y2="394.0894" stroke="#ffc000" stroke-width="1" />
<rect x="1018.5" y="383.064" width="7" height="18.32639999999998" fill="#808080"/>
<line x1="1018.5" y1="383.064" x2="1018.5" y2="401.3904" stroke="#ffc000" stroke-width="1" />
<line x1="1025.5" y1="383.064" x2="1025.5" y2="401.3904" stroke="#ffc000" stroke-width="1" />
<line x1="326" y1="350.5" x2="1014" y2="350.5" stroke="#80a0ff" stroke-width="1" />
<line x1="1010" y1="293.5" x2="1276" y2="293.5" stroke="#80a0ff" stroke-width="1" />
<line x1="1010" y1="295.5" x2="1276" y2="295.5" stroke="#80a0ff" stroke-width="1" />
<line x1="1012" y1="298.5" x2="1273" y2="298.5" stroke="#80a0ff" stroke-width="1" />
<line x1="1010.5" y1="293" x2="1010.5" y2="296" stroke="#80a0ff" stroke-width="1" />
<line x1="1275.5" y1="293" x2="1275.5" y2="296" stroke="#80a0ff" stroke-width="1" />
<line x1="1014.5" y1="298" x2="1014.5" y2="376" stroke="#80a0ff" stroke-width="1" />
<line x1="1272.5" y1="298" x2="1272.5" y2="388" stroke="#80a0ff" stroke-width="1" />
<line x1="989" y1="306.5" x2="1014" y2="306.5" stroke="#80a0ff" stroke-width="1" />
<line x1="989" y1="310.5" x2="1014" y2="310.5" stroke="#80a0ff" stroke-width="1" />
<line x1="990.5" y1="306" x2="990.5" y2="311" stroke="#80a0ff" stroke-width="1" />
<rect x="1267" y="351" width="5" height="10" fill="#808080"/>
<line x1="1267.5" y1="351" x2="1267.5" y2="388" stroke="#ffc000" stroke-width="1" />
<line x1="1267" y1="351.5" x2="1272" y2="351.5" stroke="#ffc000" stroke-width="1" />
<line x1="1267" y1="360.5" x2="1272" y2="360.5" stroke="#ffc000" stroke-width="1" />
<path d="M1272.5 351.5 H1280.5 V359.5 H1276.5 V361.5 H1272.5" fill="none" stroke="#80a0ff" stroke-width="1"/>
<rect x="1272.5" y="377.5" width="3" height="3" fill="none" stroke="#80a0ff" stroke-width="1"/>
<line x1="326" y1="491.5" x2="1272" y2="491.5" stroke="#80a0ff" stroke-width="1" />
<rect x="326" y="492" width="946" height="5" fill="#808080"/>
<line x1="326" y1="492.5" x2="1272" y2="492.5" stroke="#ffc000" stroke-width="1" />
<line x1="326" y1="496.5" x2="1272" y2="496.5" stroke="#ffc000" stroke-width="1" />
<line x1="326" y1="595.5" x2="1272" y2="595.5" stroke="#80a0ff" stroke-width="1" />
<rect x="326" y="596" width="946" height="5" fill="#808080"/>
<line x1="326" y1="596.5" x2="1272" y2="596.5" stroke="#ffc000" stroke-width="1" />
<line x1="326" y1="600.5" x2="1272" y2="600.5" stroke="#ffc000" stroke-width="1" />
<line x1="326" y1="773.5" x2="1272" y2="773.5" stroke="#80a0ff" stroke-width="1" />
<rect x="326" y="774" width="946" height="5" fill="#808080"/>
<line x1="326" y1="774.5" x2="1272" y2="774.5" stroke="#ffc000" stroke-width="1" />
<line x1="326" y1="778.5" x2="1272" y2="778.5" stroke="#ffc000" stroke-width="1" />
<rect x="523.5" y="496" width="7" height="17" fill="#808080"/>
<line x1="523.5" y1="496" x2="523.5" y2="513" stroke="#ffc000" stroke-width="1" />
<line x1="530.5" y1="496" x2="530.5" y2="513" stroke="#ffc000" stroke-width="1" />
<rect x="773.5" y="496" width="7" height="17" fill="#808080"/>
<line x1="773.5" y1="496" x2="773.5" y2="513" stroke="#ffc000" stroke-width="1" />
<line x1="780.5" y1="496" x2="780.5" y2="513" stroke="#ffc000" stroke-width="1" />
<rect x="1018.5" y="496" width="7" height="17" fill="#808080"/>
<line x1="1018.5" y1="496" x2="1018.5" y2="513" stroke="#ffc000" stroke-width="1" />
<line x1="1025.5" y1="496" x2="1025.5" y2="513" stroke="#ffc000" stroke-width="1" />
<rect x="523.5" y="600" width="7" height="17" fill="#808080"/>
<line x1="523.5" y1="600" x2="523.5" y2="617" stroke="#ffc000" stroke-width="1" />
<line x1="530.5" y1="600" x2="530.5" y2="617" stroke="#ffc000" stroke-width="1" />
<rect x="773.5" y="600" width="7" height="17" fill="#808080"/>
<line x1="773.5" y1="600" x2="773.5" y2="617" stroke="#ffc000" stroke-width="1" />
<line x1="780.5" y1="600" x2="780.5" y2="617" stroke="#ffc000" stroke-width="1" />
<rect x="1018.5" y="600" width="7" height="17" fill="#808080"/>
<line x1="1018.5" y1="600" x2="1018.5" y2="617" stroke="#ffc000" stroke-width="1" />
<line x1="1025.5" y1="600" x2="1025.5" y2="617" stroke="#ffc000" stroke-width="1" />
<rect x="523.5" y="778" width="7" height="17" fill="#808080"/>
<line x1="523.5" y1="778" x2="523.5" y2="795" stroke="#ffc000" stroke-width="1" />
<line x1="530.5" y1="778" x2="530.5" y2="795" stroke="#ffc000" stroke-width="1" />
<line x1="523" y1="795.5" x2="531" y2="795.5" stroke="#ffc000" stroke-width="1" />
<rect x="773.5" y="778" width="7" height="17" fill="#808080"/>
<line x1="773.5" y1="778" x2="773.5" y2="795" stroke="#ffc000" stroke-width="1" />
<line x1="780.5" y1="778" x2="780.5" y2="795" stroke="#ffc000" stroke-width="1" />
<line x1="773" y1="795.5" x2="781" y2="795.5" stroke="#ffc000" stroke-width="1" />
<rect x="1014.5" y="778" width="7" height="17" fill="#808080"/>
<line x1="1014.5" y1="778" x2="1014.5" y2="795" stroke="#ffc000" stroke-width="1" />
<line x1="1021.5" y1="778" x2="1021.5" y2="795" stroke="#ffc000" stroke-width="1" />
<line x1="1014" y1="795.5" x2="1022" y2="795.5" stroke="#ffc000" stroke-width="1" />
<line x1="326" y1="513.5" x2="1265" y2="513.5" stroke="#80a0ff" stroke-width="1" />
<line x1="326" y1="617.5" x2="1265" y2="617.5" stroke="#80a0ff" stroke-width="1" />
<line x1="426.5" y1="404.614" x2="426.5" y2="491" stroke="#80a0ff" stroke-width="1" />
<line x1="426.5" y1="513" x2="426.5" y2="595" stroke="#80a0ff" stroke-width="1" />
<line x1="426.5" y1="617" x2="426.5" y2="773" stroke="#80a0ff" stroke-width="1" />
<line x1="479.5" y1="402.9975" x2="479.5" y2="491" stroke="#80a0ff" stroke-width="1" />
<line x1="479.5" y1="513" x2="479.5" y2="595" stroke="#80a0ff" stroke-width="1" />
<line x1="479.5" y1="617" x2="479.5" y2="773" stroke="#80a0ff" stroke-width="1" />
<line x1="519.5" y1="401.7775" x2="519.5" y2="491" stroke="#80a0ff" stroke-width="1" />
<line x1="519.5" y1="513" x2="519.5" y2="595" stroke="#80a0ff" stroke-width="1" />
<line x1="519.5" y1="617" x2="519.5" y2="773" stroke="#80a0ff" stroke-width="1" />
<line x1="534.5" y1="401.32" x2="534.5" y2="491" stroke="#80a0ff" stroke-width="1" />
<line x1="534.5" y1="513" x2="534.5" y2="595" stroke="#80a0ff" stroke-width="1" />
<line x1="534.5" y1="617" x2="534.5" y2="773" stroke="#80a0ff" stroke-width="1" />
<line x1="769.5" y1="394.1525" x2="769.5" y2="491" stroke="#80a0ff" stroke-width="1" />
<line x1="769.5" y1="513" x2="769.5" y2="595" stroke="#80a0ff" stroke-width="1" />
<line x1="769.5" y1="617" x2="769.5" y2="773" stroke="#80a0ff" stroke-width="1" />
<line x1="784.5" y1="394.298" x2="784.5" y2="491" stroke="#80a0ff" stroke-width="1" />
<line x1="784.5" y1="513" x2="784.5" y2="595" stroke="#80a0ff" stroke-width="1" />
<line x1="784.5" y1="617" x2="784.5" y2="773" stroke="#80a0ff" stroke-width="1" />
<line x1="1014.5" y1="401.152" x2="1014.5" y2="491" stroke="#80a0ff" stroke-width="1" />
<line x1="1014.5" y1="513" x2="1014.5" y2="595" stroke="#80a0ff" stroke-width="1" />
<line x1="1014.5" y1="617" x2="1014.5" y2="773" stroke="#80a0ff" stroke-width="1" />
<line x1="1029.5" y1="401.599" x2="1029.5" y2="491" stroke="#80a0ff" stroke-width="1" />
<line x1="1029.5" y1="513" x2="1029.5" y2="595" stroke="#80a0ff" stroke-width="1" />
<line x1="1029.5" y1="617" x2="1029.5" y2="773" stroke="#80a0ff" stroke-width="1" />
<line x1="1083.5" y1="403.2082" x2="1083.5" y2="491" stroke="#80a0ff" stroke-width="1" />
<line x1="1083.5" y1="513" x2="1083.5" y2="595" stroke="#80a0ff" stroke-width="1" />
<line x1="1083.5" y1="617" x2="1083.5" y2="773" stroke="#80a0ff" stroke-width="1" />
<line x1="1178.5" y1="406.0392" x2="1178.5" y2="491" stroke="#80a0ff" stroke-width="1" />
<line x1="1178.5" y1="513" x2="1178.5" y2="595" stroke="#80a0ff" stroke-width="1" />
<line x1="1178.5" y1="617" x2="1178.5" y2="773" stroke="#80a0ff" stroke-width="1" />
<line x1="1257.5" y1="408.3934" x2="1257.5" y2="491" stroke="#80a0ff" stroke-width="1" />
<line x1="1257.5" y1="513" x2="1257.5" y2="595" stroke="#80a0ff" stroke-width="1" />
<line x1="1257.5" y1="617" x2="1257.5" y2="773" stroke="#80a0ff" stroke-width="1" />
<path d="M326 439.5 H340.5 V491" fill="none" stroke="#80a0ff" stroke-width="1"/>
<rect x="337" y="463" width="2" height="8" fill="#80a0ff"/>
<path d="M428.5 491 V439.5 H465.5 V491" fill="none" stroke="#80a0ff" stroke-width="1"/>
<line x1="447.5" y1="439" x2="447.5" y2="491" stroke="#80a0ff" stroke-width="1" />
<rect x="444" y="463" width="2" height="8" fill="#80a0ff"/>
<rect x="448.5" y="463.5" width="2" height="7" fill="none" stroke="#80a0ff" stroke-width="1"/>
<path d="M536.5 491 V439.5 H573.5 V491" fill="none" stroke="#80a0ff" stroke-width="1"/>
<line x1="555.5" y1="439" x2="555.5" y2="491" stroke="#80a0ff" stroke-width="1" />
<rect x="552" y="463" width="2" height="8" fill="#80a0ff"/>
<rect x="556.5" y="463.5" width="2" height="7" fill="none" stroke="#80a0ff" stroke-width="1"/>
<path d="M326 543.5 H340.5 V595" fill="none" stroke="#80a0ff" stroke-width="1"/>
<rect x="337" y="567" width="2" height="8" fill="#80a0ff"/>
<path d="M428.5 595 V543.5 H465.5 V595" fill="none" stroke="#80a0ff" stroke-width="1"/>
<line x1="447.5" y1="543" x2="447.5" y2="595" stroke="#80a0ff" stroke-width="1" />
<rect x="444" y="567" width="2" height="8" fill="#80a0ff"/>
<rect x="448.5" y="567.5" width="2" height="7" fill="none" stroke="#80a0ff" stroke-width="1"/>
<path d="M536.5 595 V543.5 H573.5 V595" fill="none" stroke="#80a0ff" stroke-width="1"/>
<line x1="555.5" y1="543" x2="555.5" y2="595" stroke="#80a0ff" stroke-width="1" />
<rect x="552" y="567" width="2" height="8" fill="#80a0ff"/>
<rect x="556.5" y="567.5" width="2" height="7" fill="none" stroke="#80a0ff" stroke-width="1"/>
<path d="M326 721.5 H340.5 V773" fill="none" stroke="#80a0ff" stroke-width="1"/>
<rect x="337" y="745" width="2" height="8" fill="#80a0ff"/>
<path d="M428.5 773 V721.5 H465.5 V773" fill="none" stroke="#80a0ff" stroke-width="1"/>
<line x1="447.5" y1="721" x2="447.5" y2="773" stroke="#80a0ff" stroke-width="1" />
<rect x="444" y="745" width="2" height="8" fill="#80a0ff"/>
<rect x="448.5" y="745.5" width="2" height="7" fill="none" stroke="#80a0ff" stroke-width="1"/>
<path d="M536.5 773 V721.5 H573.5 V773" fill="none" stroke="#80a0ff" stroke-width="1"/>
<line x1="555.5" y1="721" x2="555.5" y2="773" stroke="#80a0ff" stroke-width="1" />
<rect x="552" y="745" width="2" height="8" fill="#80a0ff"/>
<rect x="556.5" y="745.5" width="2" height="7" fill="none" stroke="#80a0ff" stroke-width="1"/>
<path d="M974.5 491 V439.5 H1012.5 V491" fill="none" stroke="#80a0ff" stroke-width="1"/>
<line x1="993.5" y1="439" x2="993.5" y2="491" stroke="#80a0ff" stroke-width="1" />
<rect x="990" y="463" width="2" height="8" fill="#80a0ff"/>
<rect x="994.5" y="463.5" width="2" height="7" fill="none" stroke="#80a0ff" stroke-width="1"/>
<path d="M1091.5 491 V439.5 H1128.5 V491" fill="none" stroke="#80a0ff" stroke-width="1"/>
<line x1="1110.5" y1="439" x2="1110.5" y2="491" stroke="#80a0ff" stroke-width="1" />
<rect x="1107" y="463" width="2" height="8" fill="#80a0ff"/>
<rect x="1111.5" y="463.5" width="2" height="7" fill="none" stroke="#80a0ff" stroke-width="1"/>
<path d="M974.5 595 V543.5 H1012.5 V595" fill="none" stroke="#80a0ff" stroke-width="1"/>
<line x1="993.5" y1="543" x2="993.5" y2="595" stroke="#80a0ff" stroke-width="1" />
<rect x="990" y="567" width="2" height="8" fill="#80a0ff"/>
<rect x="994.5" y="567.5" width="2" height="7" fill="none" stroke="#80a0ff" stroke-width="1"/>
<path d="M1091.5 595 V543.5 H1128.5 V595" fill="none" stroke="#80a0ff" stroke-width="1"/>
<line x1="1110.5" y1="543" x2="1110.5" y2="595" stroke="#80a0ff" stroke-width="1" />
<rect x="1107" y="567" width="2" height="8" fill="#80a0ff"/>
<rect x="1111.5" y="567.5" width="2" height="7" fill="none" stroke="#80a0ff" stroke-width="1"/>
<path d="M889.5 769 V717.5 H919.5 V769" fill="none" stroke="#80a0ff" stroke-width="1"/>
<line x1="904.5" y1="717" x2="904.5" y2="769" stroke="#80a0ff" stroke-width="1" />
<rect x="901" y="741" width="2" height="8" fill="#80a0ff"/>
<rect x="905.5" y="741.5" width="2" height="7" fill="none" stroke="#80a0ff" stroke-width="1"/>
<line x1="889" y1="769.5" x2="920" y2="769.5" stroke="#80a0ff" stroke-width="1" />
<path d="M1046.5 769 V717.5 H1076.5 V769" fill="none" stroke="#80a0ff" stroke-width="1"/>
<line x1="1061.5" y1="717" x2="1061.5" y2="769" stroke="#80a0ff" stroke-width="1" />
<rect x="1058" y="741" width="2" height="8" fill="#80a0ff"/>
<rect x="1062.5" y="741.5" width="2" height="7" fill="none" stroke="#80a0ff" stroke-width="1"/>
<line x1="1046" y1="769.5" x2="1077" y2="769.5" stroke="#80a0ff" stroke-width="1" />
<path d="M1091.5 773 V721.5 H1128.5 V773" fill="none" stroke="#80a0ff" stroke-width="1"/>
<line x1="1110.5" y1="721" x2="1110.5" y2="773" stroke="#80a0ff" stroke-width="1" />
<rect x="1107" y="745" width="2" height="8" fill="#80a0ff"/>
<rect x="1111.5" y="745.5" width="2" height="7" fill="none" stroke="#80a0ff" stroke-width="1"/>
<rect x="1267" y="409" width="5" height="61" fill="none"/>
<line x1="1267.5" y1="409" x2="1267.5" y2="470" stroke="#00ffff" stroke-width="1" />
<line x1="1269.5" y1="409" x2="1269.5" y2="470" stroke="#00ffff" stroke-width="1" />
<line x1="1271.5" y1="409" x2="1271.5" y2="470" stroke="#00ffff" stroke-width="1" />
<rect x="1267" y="513" width="5" height="60" fill="none"/>
<line x1="1267.5" y1="513" x2="1267.5" y2="573" stroke="#00ffff" stroke-width="1" />
<line x1="1269.5" y1="513" x2="1269.5" y2="573" stroke="#00ffff" stroke-width="1" />
<line x1="1271.5" y1="513" x2="1271.5" y2="573" stroke="#00ffff" stroke-width="1" />
<rect x="1267" y="617" width="5" height="52" fill="none"/>
<line x1="1267.5" y1="617" x2="1267.5" y2="669" stroke="#00ffff" stroke-width="1" />
<line x1="1269.5" y1="617" x2="1269.5" y2="669" stroke="#00ffff" stroke-width="1" />
<line x1="1271.5" y1="617" x2="1271.5" y2="669" stroke="#00ffff" stroke-width="1" />
<rect x="1267" y="691" width="5" height="61" fill="none"/>
<line x1="1267.5" y1="691" x2="1267.5" y2="752" stroke="#00ffff" stroke-width="1" />
<line x1="1269.5" y1="691" x2="1269.5" y2="752" stroke="#00ffff" stroke-width="1" />
<line x1="1271.5" y1="691" x2="1271.5" y2="752" stroke="#00ffff" stroke-width="1" />
<line x1="1266.5" y1="470" x2="1266.5" y2="491" stroke="#ffc000" stroke-width="1" />
<line x1="1272.5" y1="470" x2="1272.5" y2="491" stroke="#ffc000" stroke-width="1" />
<line x1="1266.5" y1="573" x2="1266.5" y2="595" stroke="#ffc000" stroke-width="1" />
<line x1="1272.5" y1="573" x2="1272.5" y2="595" stroke="#ffc000" stroke-width="1" />
<line x1="1266.5" y1="669" x2="1266.5" y2="691" stroke="#ffc000" stroke-width="1" />
<line x1="1272.5" y1="669" x2="1272.5" y2="691" stroke="#ffc000" stroke-width="1" />
<line x1="1266.5" y1="752" x2="1266.5" y2="773" stroke="#ffc000" stroke-width="1" />
<line x1="1272.5" y1="752" x2="1272.5" y2="773" stroke="#ffc000" stroke-width="1" />
<rect x="1265" y="388" width="7" height="21" fill="#808080"/>
<line x1="1264.5" y1="388" x2="1264.5" y2="409" stroke="#ffc000" stroke-width="1" />
<rect x="1265" y="497" width="7" height="16" fill="#808080"/>
<line x1="1264.5" y1="497" x2="1264.5" y2="513" stroke="#ffc000" stroke-width="1" />
<line x1="1272.5" y1="497" x2="1272.5" y2="513" stroke="#ffc000" stroke-width="1" />
<rect x="1265" y="601" width="7" height="16" fill="#808080"/>
<line x1="1264.5" y1="601" x2="1264.5" y2="617" stroke="#ffc000" stroke-width="1" />
<line x1="1272.5" y1="601" x2="1272.5" y2="617" stroke="#ffc000" stroke-width="1" />
<rect x="1265" y="779" width="7" height="16" fill="#808080"/>
<line x1="1264.5" y1="779" x2="1264.5" y2="795" stroke="#ffc000" stroke-width="1" />
<line x1="1272.5" y1="779" x2="1272.5" y2="795" stroke="#ffc000" stroke-width="1" />
<rect x="1272" y="612" width="5" height="5" fill="#808080"/>
<path d="M1272.5 611.5 H1277.5 V617.5" fill="none" stroke="#ffc000" stroke-width="1"/>
<rect x="1266" y="682" width="6" height="9" fill="#808080"/>
<line x1="1264" y1="795.5" x2="1272" y2="795.5" stroke="#ffc000" stroke-width="1" />
<rect x="1272" y="781" width="112" height="5" fill="#808080"/>
<line x1="1272" y1="781.5" x2="1384" y2="781.5" stroke="#ffc000" stroke-width="1" />
<line x1="1272" y1="785.5" x2="1384" y2="785.5" stroke="#ffc000" stroke-width="1" />
<line x1="1383.5" y1="781" x2="1383.5" y2="786" stroke="#ffc000" stroke-width="1" />
<path d="M1272 774 L1346 780.5" fill="none" stroke="#80a0ff" stroke-width="1"/>
<path d="M1272 776 L1346 782.5" fill="none" stroke="#80a0ff" stroke-width="1"/>
<path d="M1286 767 L1347 774" fill="none" stroke="#00ff00" stroke-width="1"/>
<path d="M1340 771 L1350 774 L1338 775z" fill="none" stroke="#00ff00" stroke-width="1"/>
<text x="1298" y="766" font-size="8" fill="#ffffff" font-family="Liberation Sans" text-anchor="start" textLength="40" lengthAdjust="spacingAndGlyphs" font-weight="bold">1:10防滑坡道</text>
<line x1="1272" y1="637.5" x2="1310" y2="637.5" stroke="#80a0ff" stroke-width="1" />
<line x1="1272" y1="646.5" x2="1310" y2="646.5" stroke="#80a0ff" stroke-width="1" />
<line x1="1310.5" y1="637" x2="1310.5" y2="647" stroke="#80a0ff" stroke-width="1" />
<path d="M1372 541.5 H1281.5 V643" fill="none" stroke="#00ff00" stroke-width="1"/>
<text x="1285" y="537" font-size="10" fill="#ffffff" font-family="Liberation Sans" text-anchor="start" textLength="88" lengthAdjust="spacingAndGlyphs" font-weight="bold">轻钢龙骨安全玻璃雨篷</text>
<text x="1304" y="555" font-size="10" fill="#ffffff" font-family="Liberation Sans" text-anchor="start" textLength="65" lengthAdjust="spacingAndGlyphs" font-weight="bold">甲方自理（余同）</text>
<line x1="1272" y1="675.5" x2="1310" y2="675.5" stroke="#00ff00" stroke-width="1" />
<line x1="1309.5" y1="647" x2="1309.5" y2="689" stroke="#00ff00" stroke-width="1" />
<g transform="translate(1277.5 666.5) scale(1.1737 1.2500)" fill="none" stroke="#ffffff" stroke-width="1" vector-effect="non-scaling-stroke" stroke-linecap="square"><path vector-effect="non-scaling-stroke" transform="translate(0.00 0)" d="M0.6 1.6 L2 0 V8"/><path vector-effect="non-scaling-stroke" transform="translate(4.70 0)" d="M4 0 H0.5 L0 3.5 H3 L4 4.5 V7 L3 8 H1 L0 7"/><path vector-effect="non-scaling-stroke" transform="translate(11.00 0)" d="M1 0 H3 L4 1.5 V6.5 L3 8 H1 L0 6.5 V1.5 Z"/><path vector-effect="non-scaling-stroke" transform="translate(17.30 0)" d="M1 0 H3 L4 1.5 V6.5 L3 8 H1 L0 6.5 V1.5 Z"/></g>
<line x1="1339.5" y1="595" x2="1339.5" y2="648" stroke="#00ff00" stroke-width="1" />
<line x1="1326" y1="637.5" x2="1352" y2="637.5" stroke="#00ff00" stroke-width="1" />
<line x1="1310" y1="647.5" x2="1352" y2="647.5" stroke="#00ff00" stroke-width="1" />
<line x1="1308" y1="595.5" x2="1352" y2="595.5" stroke="#00ff00" stroke-width="1" />
<g transform="translate(1338.5 628.5) rotate(-90) translate(0 -10) scale(1.0798 1.2500)" fill="none" stroke="#ffffff" stroke-width="1" vector-effect="non-scaling-stroke" stroke-linecap="square"><path vector-effect="non-scaling-stroke" transform="translate(0.00 0)" d="M0.6 1.6 L2 0 V8"/><path vector-effect="non-scaling-stroke" transform="translate(4.70 0)" d="M0 0 H4 L1.5 8"/><path vector-effect="non-scaling-stroke" transform="translate(11.00 0)" d="M1 0 H3 L4 1.5 V6.5 L3 8 H1 L0 6.5 V1.5 Z"/><path vector-effect="non-scaling-stroke" transform="translate(17.30 0)" d="M1 0 H3 L4 1.5 V6.5 L3 8 H1 L0 6.5 V1.5 Z"/></g>
<g transform="translate(1338.5 663.5) rotate(-90) translate(0 -10) scale(1.1243 1.2500)" fill="none" stroke="#ffffff" stroke-width="1" vector-effect="non-scaling-stroke" stroke-linecap="square"><path vector-effect="non-scaling-stroke" transform="translate(0.00 0)" d="M3 8 V0 L0 5.5 H4.3"/><path vector-effect="non-scaling-stroke" transform="translate(6.60 0)" d="M1 0 H3 L4 1.5 V6.5 L3 8 H1 L0 6.5 V1.5 Z"/><path vector-effect="non-scaling-stroke" transform="translate(12.90 0)" d="M1 0 H3 L4 1.5 V6.5 L3 8 H1 L0 6.5 V1.5 Z"/></g>
<line x1="388" y1="370.5" x2="442" y2="370.5" stroke="#00ff00" stroke-width="1" />
<path d="M388 370.5 L394 368 V373z M394 368.5 H400 V372.5 H394" fill="none" stroke="#00ff00" stroke-width="1"/>
<g transform="translate(409.5 361.5) scale(1.1650 0.8750)" fill="none" stroke="#ffffff" stroke-width="1" vector-effect="non-scaling-stroke" stroke-linecap="square"><path vector-effect="non-scaling-stroke" transform="translate(0.00 0)" d="M0 1 L1 0 H3 L4 1 V3 L3 4 H1.5 M3 4 L4 5 V7 L3 8 H1 L0 7"/><path vector-effect="non-scaling-stroke" transform="translate(6.30 0)" d="M0 8 L4 0 M0.5 0.5 h1 v1.5 h-1z M2.5 6 h1 v1.5 h-1z"/></g>
<text x="447" y="371" font-size="8" fill="#ffffff" font-family="Liberation Sans" text-anchor="start" textLength="6" lengthAdjust="spacingAndGlyphs" font-weight="bold">下</text>
<path d="M518 368.5 L529 379 L540 368.5" fill="none" stroke="#00ff00" stroke-width="1"/>
<line x1="518" y1="368.5" x2="575" y2="368.5" stroke="#00ff00" stroke-width="1" />
<g transform="translate(538.5 356.5) scale(1.1650 1.2500)" fill="none" stroke="#ffffff" stroke-width="1" vector-effect="non-scaling-stroke" stroke-linecap="square"><path vector-effect="non-scaling-stroke" transform="translate(0.00 0)" d="M0.6 1.6 L2 0 V8"/><path vector-effect="non-scaling-stroke" transform="translate(4.70 0)" d="M4 0 H0.5 L0 3.5 H3 L4 4.5 V7 L3 8 H1 L0 7"/><path vector-effect="non-scaling-stroke" transform="translate(11.00 0)" d="M0.5 7.3 V8"/><path vector-effect="non-scaling-stroke" transform="translate(14.30 0)" d="M0.5 8 H1.5 L4 5 V1 L3 0 H1 L0 1 V3 L1 4 H3 L4 3"/><path vector-effect="non-scaling-stroke" transform="translate(20.60 0)" d="M1 0 H3 L4 1.5 V6.5 L3 8 H1 L0 6.5 V1.5 Z"/><path vector-effect="non-scaling-stroke" transform="translate(26.90 0)" d="M1 0 H3 L4 1.5 V6.5 L3 8 H1 L0 6.5 V1.5 Z"/></g>
<text x="541" y="341" font-size="9" fill="#ffffff" font-family="Liberation Sans" text-anchor="start" textLength="32" lengthAdjust="spacingAndGlyphs" font-weight="bold">高度计算点</text>
<text x="651" y="363" font-size="9" fill="#ffffff" font-family="Liberation Sans" text-anchor="start" textLength="25" lengthAdjust="spacingAndGlyphs" font-weight="bold">上人屋面</text>
<path d="M765 361.5 L776 372 L787 361.5" fill="none" stroke="#00ff00" stroke-width="1"/>
<line x1="765" y1="361.5" x2="824" y2="361.5" stroke="#00ff00" stroke-width="1" />
<g transform="translate(785.5 349.5) scale(1.1974 1.2500)" fill="none" stroke="#ffffff" stroke-width="1" vector-effect="non-scaling-stroke" stroke-linecap="square"><path vector-effect="non-scaling-stroke" transform="translate(0.00 0)" d="M0.6 1.6 L2 0 V8"/><path vector-effect="non-scaling-stroke" transform="translate(4.70 0)" d="M3.5 0 H1.5 L0 2 V7 L1 8 H3 L4 7 V5 L3 4 H1 L0 5"/><path vector-effect="non-scaling-stroke" transform="translate(11.00 0)" d="M0.5 7.3 V8"/><path vector-effect="non-scaling-stroke" transform="translate(14.30 0)" d="M0 1.5 L1 0 H3 L4 1.2 V3 L0 8 H4"/><path vector-effect="non-scaling-stroke" transform="translate(20.60 0)" d="M1 0 H3 L4 1.5 V6.5 L3 8 H1 L0 6.5 V1.5 Z"/><path vector-effect="non-scaling-stroke" transform="translate(26.90 0)" d="M1 0 H3 L4 1.5 V6.5 L3 8 H1 L0 6.5 V1.5 Z"/></g>
<path d="M916 339.5 L927 350 L938 339.5" fill="none" stroke="#00ff00" stroke-width="1"/>
<line x1="916" y1="339.5" x2="973" y2="339.5" stroke="#00ff00" stroke-width="1" />
<g transform="translate(937.5 327.5) scale(1.1604 1.2500)" fill="none" stroke="#ffffff" stroke-width="1" vector-effect="non-scaling-stroke" stroke-linecap="square"><path vector-effect="non-scaling-stroke" transform="translate(0.00 0)" d="M0.6 1.6 L2 0 V8"/><path vector-effect="non-scaling-stroke" transform="translate(4.70 0)" d="M0 0 H4 L1.5 8"/><path vector-effect="non-scaling-stroke" transform="translate(11.00 0)" d="M0.5 7.3 V8"/><path vector-effect="non-scaling-stroke" transform="translate(14.30 0)" d="M0.6 1.6 L2 0 V8"/><path vector-effect="non-scaling-stroke" transform="translate(19.00 0)" d="M1 0 H3 L4 1.5 V6.5 L3 8 H1 L0 6.5 V1.5 Z"/><path vector-effect="non-scaling-stroke" transform="translate(25.30 0)" d="M1 0 H3 L4 1.5 V6.5 L3 8 H1 L0 6.5 V1.5 Z"/></g>
<path d="M1124 282.5 L1135 293 L1146 282.5" fill="none" stroke="#00ff00" stroke-width="1"/>
<line x1="1124" y1="282.5" x2="1182" y2="282.5" stroke="#00ff00" stroke-width="1" />
<g transform="translate(1143.5 270.5) scale(1.2179 1.2500)" fill="none" stroke="#ffffff" stroke-width="1" vector-effect="non-scaling-stroke" stroke-linecap="square"><path vector-effect="non-scaling-stroke" transform="translate(0.00 0)" d="M0.6 1.6 L2 0 V8"/><path vector-effect="non-scaling-stroke" transform="translate(4.70 0)" d="M0.5 8 H1.5 L4 5 V1 L3 0 H1 L0 1 V3 L1 4 H3 L4 3"/><path vector-effect="non-scaling-stroke" transform="translate(11.00 0)" d="M0.5 7.3 V8"/><path vector-effect="non-scaling-stroke" transform="translate(14.30 0)" d="M3 8 V0 L0 5.5 H4.3"/><path vector-effect="non-scaling-stroke" transform="translate(20.90 0)" d="M1 0 H3 L4 1.5 V6.5 L3 8 H1 L0 6.5 V1.5 Z"/><path vector-effect="non-scaling-stroke" transform="translate(27.20 0)" d="M1 0 H3 L4 1.5 V6.5 L3 8 H1 L0 6.5 V1.5 Z"/></g>
<line x1="1123" y1="367.5" x2="1177" y2="367.5" stroke="#00ff00" stroke-width="1" />
<path d="M1170 365 L1177 367.5 L1170 370z" fill="none" stroke="#00ff00" stroke-width="1"/>
<g transform="translate(1144.5 357.5) scale(1.2621 1.0000)" fill="none" stroke="#ffffff" stroke-width="1" vector-effect="non-scaling-stroke" stroke-linecap="square"><path vector-effect="non-scaling-stroke" transform="translate(0.00 0)" d="M0 1 L1 0 H3 L4 1 V3 L3 4 H1.5 M3 4 L4 5 V7 L3 8 H1 L0 7"/><path vector-effect="non-scaling-stroke" transform="translate(6.30 0)" d="M0 8 L4 0 M0.5 0.5 h1 v1.5 h-1z M2.5 6 h1 v1.5 h-1z"/></g>
<text x="1112" y="367" font-size="8" fill="#ffffff" font-family="Liberation Sans" text-anchor="start" textLength="6" lengthAdjust="spacingAndGlyphs" font-weight="bold">下</text>
<text x="816" y="471" font-size="9" fill="#ffffff" font-family="Liberation Sans" text-anchor="start" textLength="26" lengthAdjust="spacingAndGlyphs" font-weight="bold">生产车间</text>
<text x="816" y="575" font-size="9" fill="#ffffff" font-family="Liberation Sans" text-anchor="start" textLength="26" lengthAdjust="spacingAndGlyphs" font-weight="bold">生产车间</text>
<text x="816" y="752" font-size="9" fill="#ffffff" font-family="Liberation Sans" text-anchor="start" textLength="26" lengthAdjust="spacingAndGlyphs" font-weight="bold">生产车间</text>
<g transform="translate(481.5 102.5) scale(1.1650 1.0000)" fill="none" stroke="#ffffff" stroke-width="1" vector-effect="non-scaling-stroke" stroke-linecap="square"><path vector-effect="non-scaling-stroke" transform="translate(0.00 0)" d="M4 0 H0 V8 M0 4 H3"/><path vector-effect="non-scaling-stroke" transform="translate(6.30 0)" d="M0 0 V8 H4"/></g>
<g transform="translate(1293.5 102.5) scale(1.1650 1.0000)" fill="none" stroke="#ffffff" stroke-width="1" vector-effect="non-scaling-stroke" stroke-linecap="square"><path vector-effect="non-scaling-stroke" transform="translate(0.00 0)" d="M4 0 H0 V8 M0 4 H3"/><path vector-effect="non-scaling-stroke" transform="translate(6.30 0)" d="M0 0 V8 H4"/></g>
<line x1="391" y1="102.5" x2="392" y2="102.5" stroke="#00ff00" stroke-width="1" />
<line x1="1047.5" y1="101" x2="1047.5" y2="103" stroke="#00ff00" stroke-width="1" />
<line x1="1203.5" y1="101" x2="1203.5" y2="103" stroke="#00ff00" stroke-width="1" />
<text x="325" y="175" font-size="18" fill="#ffffff" font-family="Liberation Sans" text-anchor="start" textLength="21" lengthAdjust="spacingAndGlyphs" >面图</text>
<g transform="translate(392.5 166.5) scale(1.2022 1.2500)" fill="none" stroke="#ffffff" stroke-width="1" vector-effect="non-scaling-stroke" stroke-linecap="square"><path vector-effect="non-scaling-stroke" transform="translate(0.00 0)" d="M0.6 1.6 L2 0 V8"/><path vector-effect="non-scaling-stroke" transform="translate(4.70 0)" d="M0.5 2 V2.7 M0.5 7.3 V8"/><path vector-effect="non-scaling-stroke" transform="translate(8.00 0)" d="M4 0 H0.5 L0 3.5 H3 L4 4.5 V7 L3 8 H1 L0 7"/><path vector-effect="non-scaling-stroke" transform="translate(14.30 0)" d="M1 0 H3 L4 1.5 V6.5 L3 8 H1 L0 6.5 V1.5 Z"/></g>
<line x1="326" y1="184.5" x2="382" y2="184.5" stroke="#00ff00" stroke-width="1" />
<g transform="translate(1061.5 161.5) scale(1.6479 1.8750)" fill="none" stroke="#ffffff" stroke-width="1" vector-effect="non-scaling-stroke" stroke-linecap="square"><path vector-effect="non-scaling-stroke" transform="translate(0.00 0)" d="M0 8 V0 H3 L4 1 V3 L3 4 H0"/><path vector-effect="non-scaling-stroke" transform="translate(6.30 0)" d="M4 1 L3 0 H1 L0 1.5 V6.5 L1 8 H3 L4 7"/><path vector-effect="non-scaling-stroke" transform="translate(12.60 0)" d="M0 1.5 L1 0 H3 L4 1.2 V3 L0 8 H4"/><path vector-effect="non-scaling-stroke" transform="translate(18.90 0)" d="M0.6 1.6 L2 0 V8"/><path vector-effect="non-scaling-stroke" transform="translate(23.60 0)" d="M0 1.5 L1 0 H3 L4 1.2 V3 L0 8 H4"/><path vector-effect="non-scaling-stroke" transform="translate(29.90 0)" d="M3 8 V0 L0 5.5 H4.3"/><path vector-effect="non-scaling-stroke" transform="translate(40.30 0)" d="M0 8 V0 H3 L4 1 V3 L3 4 H0"/></g>
<text x="1136" y="175" font-size="18" fill="#ffffff" font-family="Liberation Sans" text-anchor="start" textLength="37" lengthAdjust="spacingAndGlyphs" >平面图</text>
<g transform="translate(1217.5 167.5) scale(1.1475 1.1250)" fill="none" stroke="#ffffff" stroke-width="1" vector-effect="non-scaling-stroke" stroke-linecap="square"><path vector-effect="non-scaling-stroke" transform="translate(0.00 0)" d="M0.6 1.6 L2 0 V8"/><path vector-effect="non-scaling-stroke" transform="translate(4.70 0)" d="M0.5 2 V2.7 M0.5 7.3 V8"/><path vector-effect="non-scaling-stroke" transform="translate(8.00 0)" d="M4 0 H0.5 L0 3.5 H3 L4 4.5 V7 L3 8 H1 L0 7"/><path vector-effect="non-scaling-stroke" transform="translate(14.30 0)" d="M1 0 H3 L4 1.5 V6.5 L3 8 H1 L0 6.5 V1.5 Z"/></g>
<line x1="1060" y1="184.5" x2="1207" y2="184.5" stroke="#00ff00" stroke-width="1" />
<g transform="translate(1869.5 207.5) scale(1.6084 1.6250)" fill="none" stroke="#ffffff" stroke-width="1" vector-effect="non-scaling-stroke" stroke-linecap="square"><path vector-effect="non-scaling-stroke" transform="translate(0.00 0)" d="M0 8 V0 L2.5 5 L5 0 V8"/><path vector-effect="non-scaling-stroke" transform="translate(7.30 0)" d="M0 1.5 L1 0 H3 L4 1.2 V3 L0 8 H4"/><path vector-effect="non-scaling-stroke" transform="translate(13.60 0)" d="M0.6 1.6 L2 0 V8"/><path vector-effect="non-scaling-stroke" transform="translate(18.30 0)" d="M0 1 L1 0 H3 L4 1 V3 L3 4 H1.5 M3 4 L4 5 V7 L3 8 H1 L0 7"/><path vector-effect="non-scaling-stroke" transform="translate(24.60 0)" d="M0 1 L1 0 H3 L4 1 V3 L3 4 H1.5 M3 4 L4 5 V7 L3 8 H1 L0 7"/></g>
<line x1="1868" y1="228.5" x2="1920" y2="228.5" stroke="#00ff00" stroke-width="1" />
<line x1="1394.5" y1="293" x2="1394.5" y2="774" stroke="#00ff00" stroke-width="1" />
<line x1="1423.5" y1="305" x2="1423.5" y2="782" stroke="#00ff00" stroke-width="1" />
<line x1="1453.5" y1="305" x2="1453.5" y2="782" stroke="#00ff00" stroke-width="1" />
<line x1="1354" y1="293.5" x2="1407" y2="293.5" stroke="#00ff00" stroke-width="1" />
<line x1="1381" y1="305.5" x2="1466" y2="305.5" stroke="#00ff00" stroke-width="1" />
<line x1="1381" y1="350.5" x2="1407" y2="350.5" stroke="#00ff00" stroke-width="1" />
<line x1="1381" y1="409.5" x2="1407" y2="409.5" stroke="#00ff00" stroke-width="1" />
<line x1="1381" y1="469.5" x2="1407" y2="469.5" stroke="#00ff00" stroke-width="1" />
<line x1="1381" y1="513.5" x2="1407" y2="513.5" stroke="#00ff00" stroke-width="1" />
<line x1="1381" y1="573.5" x2="1407" y2="573.5" stroke="#00ff00" stroke-width="1" />
<line x1="1381" y1="662.5" x2="1407" y2="662.5" stroke="#00ff00" stroke-width="1" />
<line x1="1381" y1="387.5" x2="1436" y2="387.5" stroke="#00ff00" stroke-width="1" />
<line x1="1381" y1="491.5" x2="1436" y2="491.5" stroke="#00ff00" stroke-width="1" />
<line x1="1381" y1="595.5" x2="1436" y2="595.5" stroke="#00ff00" stroke-width="1" />
<line x1="1381" y1="773.5" x2="1436" y2="773.5" stroke="#00ff00" stroke-width="1" />
<line x1="1346" y1="773.5" x2="1400" y2="773.5" stroke="#00ff00" stroke-width="1" />
<line x1="1384" y1="781.5" x2="1466" y2="781.5" stroke="#00ff00" stroke-width="1" />
<path d="M1391 290 L1397 296" fill="none" stroke="#00ff00" stroke-width="1"/>
<path d="M1391 302 L1397 308" fill="none" stroke="#00ff00" stroke-width="1"/>
<path d="M1391 347 L1397 353" fill="none" stroke="#00ff00" stroke-width="1"/>
<path d="M1391 384 L1397 390" fill="none" stroke="#00ff00" stroke-width="1"/>
<path d="M1391 406 L1397 412" fill="none" stroke="#00ff00" stroke-width="1"/>
<path d="M1391 466 L1397 472" fill="none" stroke="#00ff00" stroke-width="1"/>
<path d="M1391 488 L1397 494" fill="none" stroke="#00ff00" stroke-width="1"/>
<path d="M1391 510 L1397 516" fill="none" stroke="#00ff00" stroke-width="1"/>
<path d="M1391 570 L1397 576" fill="none" stroke="#00ff00" stroke-width="1"/>
<path d="M1391 592 L1397 598" fill="none" stroke="#00ff00" stroke-width="1"/>
<path d="M1391 659 L1397 665" fill="none" stroke="#00ff00" stroke-width="1"/>
<path d="M1391 770 L1397 776" fill="none" stroke="#00ff00" stroke-width="1"/>
<path d="M1420 302 L1426 308" fill="none" stroke="#00ff00" stroke-width="1"/>
<path d="M1420 384 L1426 390" fill="none" stroke="#00ff00" stroke-width="1"/>
<path d="M1420 488 L1426 494" fill="none" stroke="#00ff00" stroke-width="1"/>
<path d="M1420 592 L1426 598" fill="none" stroke="#00ff00" stroke-width="1"/>
<path d="M1420 778 L1426 784" fill="none" stroke="#00ff00" stroke-width="1"/>
<path d="M1450 302 L1456 308" fill="none" stroke="#00ff00" stroke-width="1"/>
<path d="M1450 778 L1456 784" fill="none" stroke="#00ff00" stroke-width="1"/>
<g transform="translate(1393.5 301.5) rotate(-90) translate(0 -10) scale(1.0843 1.2500)" fill="none" stroke="#ffffff" stroke-width="1" vector-effect="non-scaling-stroke" stroke-linecap="square"><path vector-effect="non-scaling-stroke" transform="translate(0.00 0)" d="M4 0 H0.5 L0 3.5 H3 L4 4.5 V7 L3 8 H1 L0 7"/><path vector-effect="non-scaling-stroke" transform="translate(6.30 0)" d="M1 0 H3 L4 1.5 V6.5 L3 8 H1 L0 6.5 V1.5 Z"/><path vector-effect="non-scaling-stroke" transform="translate(12.60 0)" d="M1 0 H3 L4 1.5 V6.5 L3 8 H1 L0 6.5 V1.5 Z"/></g>
<g transform="translate(1393.5 341.5) rotate(-90) translate(0 -10) scale(1.1268 1.2500)" fill="none" stroke="#ffffff" stroke-width="1" vector-effect="non-scaling-stroke" stroke-linecap="square"><path vector-effect="non-scaling-stroke" transform="translate(0.00 0)" d="M0.6 1.6 L2 0 V8"/><path vector-effect="non-scaling-stroke" transform="translate(4.70 0)" d="M1 0 H3 L4 1 V3 L3 4 H1 L0 5 V7 L1 8 H3 L4 7 V5 L3 4 H1 L0 3 V1 Z"/><path vector-effect="non-scaling-stroke" transform="translate(11.00 0)" d="M1 0 H3 L4 1.5 V6.5 L3 8 H1 L0 6.5 V1.5 Z"/><path vector-effect="non-scaling-stroke" transform="translate(17.30 0)" d="M1 0 H3 L4 1.5 V6.5 L3 8 H1 L0 6.5 V1.5 Z"/></g>
<g transform="translate(1393.5 381.5) rotate(-90) translate(0 -10) scale(1.1268 1.2500)" fill="none" stroke="#ffffff" stroke-width="1" vector-effect="non-scaling-stroke" stroke-linecap="square"><path vector-effect="non-scaling-stroke" transform="translate(0.00 0)" d="M0.6 1.6 L2 0 V8"/><path vector-effect="non-scaling-stroke" transform="translate(4.70 0)" d="M4 0 H0.5 L0 3.5 H3 L4 4.5 V7 L3 8 H1 L0 7"/><path vector-effect="non-scaling-stroke" transform="translate(11.00 0)" d="M1 0 H3 L4 1.5 V6.5 L3 8 H1 L0 6.5 V1.5 Z"/><path vector-effect="non-scaling-stroke" transform="translate(17.30 0)" d="M1 0 H3 L4 1.5 V6.5 L3 8 H1 L0 6.5 V1.5 Z"/></g>
<g transform="translate(1393.5 409.5) rotate(-90) translate(0 -10) scale(1.2048 1.2500)" fill="none" stroke="#ffffff" stroke-width="1" vector-effect="non-scaling-stroke" stroke-linecap="square"><path vector-effect="non-scaling-stroke" transform="translate(0.00 0)" d="M0.5 8 H1.5 L4 5 V1 L3 0 H1 L0 1 V3 L1 4 H3 L4 3"/><path vector-effect="non-scaling-stroke" transform="translate(6.30 0)" d="M1 0 H3 L4 1.5 V6.5 L3 8 H1 L0 6.5 V1.5 Z"/><path vector-effect="non-scaling-stroke" transform="translate(12.60 0)" d="M1 0 H3 L4 1.5 V6.5 L3 8 H1 L0 6.5 V1.5 Z"/></g>
<g transform="translate(1393.5 455.5) rotate(-90) translate(0 -10) scale(1.2069 1.2500)" fill="none" stroke="#ffffff" stroke-width="1" vector-effect="non-scaling-stroke" stroke-linecap="square"><path vector-effect="non-scaling-stroke" transform="translate(0.00 0)" d="M0 1.5 L1 0 H3 L4 1.2 V3 L0 8 H4"/><path vector-effect="non-scaling-stroke" transform="translate(6.30 0)" d="M3 8 V0 L0 5.5 H4.3"/><path vector-effect="non-scaling-stroke" transform="translate(12.90 0)" d="M1 0 H3 L4 1.5 V6.5 L3 8 H1 L0 6.5 V1.5 Z"/><path vector-effect="non-scaling-stroke" transform="translate(19.20 0)" d="M1 0 H3 L4 1.5 V6.5 L3 8 H1 L0 6.5 V1.5 Z"/></g>
<g transform="translate(1393.5 491.5) rotate(-90) translate(0 -10) scale(1.2048 1.2500)" fill="none" stroke="#ffffff" stroke-width="1" vector-effect="non-scaling-stroke" stroke-linecap="square"><path vector-effect="non-scaling-stroke" transform="translate(0.00 0)" d="M0.5 8 H1.5 L4 5 V1 L3 0 H1 L0 1 V3 L1 4 H3 L4 3"/><path vector-effect="non-scaling-stroke" transform="translate(6.30 0)" d="M1 0 H3 L4 1.5 V6.5 L3 8 H1 L0 6.5 V1.5 Z"/><path vector-effect="non-scaling-stroke" transform="translate(12.60 0)" d="M1 0 H3 L4 1.5 V6.5 L3 8 H1 L0 6.5 V1.5 Z"/></g>
<g transform="translate(1393.5 512.5) rotate(-90) translate(0 -10) scale(1.1446 1.2500)" fill="none" stroke="#ffffff" stroke-width="1" vector-effect="non-scaling-stroke" stroke-linecap="square"><path vector-effect="non-scaling-stroke" transform="translate(0.00 0)" d="M0.5 8 H1.5 L4 5 V1 L3 0 H1 L0 1 V3 L1 4 H3 L4 3"/><path vector-effect="non-scaling-stroke" transform="translate(6.30 0)" d="M1 0 H3 L4 1.5 V6.5 L3 8 H1 L0 6.5 V1.5 Z"/><path vector-effect="non-scaling-stroke" transform="translate(12.60 0)" d="M1 0 H3 L4 1.5 V6.5 L3 8 H1 L0 6.5 V1.5 Z"/></g>
<g transform="translate(1393.5 558.5) rotate(-90) translate(0 -10) scale(1.2069 1.2500)" fill="none" stroke="#ffffff" stroke-width="1" vector-effect="non-scaling-stroke" stroke-linecap="square"><path vector-effect="non-scaling-stroke" transform="translate(0.00 0)" d="M0 1.5 L1 0 H3 L4 1.2 V3 L0 8 H4"/><path vector-effect="non-scaling-stroke" transform="translate(6.30 0)" d="M3 8 V0 L0 5.5 H4.3"/><path vector-effect="non-scaling-stroke" transform="translate(12.90 0)" d="M1 0 H3 L4 1.5 V6.5 L3 8 H1 L0 6.5 V1.5 Z"/><path vector-effect="non-scaling-stroke" transform="translate(19.20 0)" d="M1 0 H3 L4 1.5 V6.5 L3 8 H1 L0 6.5 V1.5 Z"/></g>
<g transform="translate(1393.5 596.5) rotate(-90) translate(0 -10) scale(1.3855 1.2500)" fill="none" stroke="#ffffff" stroke-width="1" vector-effect="non-scaling-stroke" stroke-linecap="square"><path vector-effect="non-scaling-stroke" transform="translate(0.00 0)" d="M0.5 8 H1.5 L4 5 V1 L3 0 H1 L0 1 V3 L1 4 H3 L4 3"/><path vector-effect="non-scaling-stroke" transform="translate(6.30 0)" d="M1 0 H3 L4 1.5 V6.5 L3 8 H1 L0 6.5 V1.5 Z"/><path vector-effect="non-scaling-stroke" transform="translate(12.60 0)" d="M1 0 H3 L4 1.5 V6.5 L3 8 H1 L0 6.5 V1.5 Z"/></g>
<g transform="translate(1393.5 643.5) rotate(-90) translate(0 -10) scale(1.1790 1.2500)" fill="none" stroke="#ffffff" stroke-width="1" vector-effect="non-scaling-stroke" stroke-linecap="square"><path vector-effect="non-scaling-stroke" transform="translate(0.00 0)" d="M0 1.5 L1 0 H3 L4 1.2 V3 L0 8 H4"/><path vector-effect="non-scaling-stroke" transform="translate(6.30 0)" d="M0 0 H4 L1.5 8"/><path vector-effect="non-scaling-stroke" transform="translate(12.60 0)" d="M1 0 H3 L4 1.5 V6.5 L3 8 H1 L0 6.5 V1.5 Z"/><path vector-effect="non-scaling-stroke" transform="translate(18.90 0)" d="M1 0 H3 L4 1.5 V6.5 L3 8 H1 L0 6.5 V1.5 Z"/></g>
<g transform="translate(1393.5 733.5) rotate(-90) translate(0 -10) scale(1.2069 1.2500)" fill="none" stroke="#ffffff" stroke-width="1" vector-effect="non-scaling-stroke" stroke-linecap="square"><path vector-effect="non-scaling-stroke" transform="translate(0.00 0)" d="M3 8 V0 L0 5.5 H4.3"/><path vector-effect="non-scaling-stroke" transform="translate(6.60 0)" d="M4 0 H0.5 L0 3.5 H3 L4 4.5 V7 L3 8 H1 L0 7"/><path vector-effect="non-scaling-stroke" transform="translate(12.90 0)" d="M1 0 H3 L4 1.5 V6.5 L3 8 H1 L0 6.5 V1.5 Z"/><path vector-effect="non-scaling-stroke" transform="translate(19.20 0)" d="M1 0 H3 L4 1.5 V6.5 L3 8 H1 L0 6.5 V1.5 Z"/></g>
<g transform="translate(1422.5 361.5) rotate(-90) translate(0 -10) scale(1.1354 1.2500)" fill="none" stroke="#ffffff" stroke-width="1" vector-effect="non-scaling-stroke" stroke-linecap="square"><path vector-effect="non-scaling-stroke" transform="translate(0.00 0)" d="M0 1 L1 0 H3 L4 1 V3 L3 4 H1.5 M3 4 L4 5 V7 L3 8 H1 L0 7"/><path vector-effect="non-scaling-stroke" transform="translate(6.30 0)" d="M0 1 L1 0 H3 L4 1 V3 L3 4 H1.5 M3 4 L4 5 V7 L3 8 H1 L0 7"/><path vector-effect="non-scaling-stroke" transform="translate(12.60 0)" d="M1 0 H3 L4 1.5 V6.5 L3 8 H1 L0 6.5 V1.5 Z"/><path vector-effect="non-scaling-stroke" transform="translate(18.90 0)" d="M1 0 H3 L4 1.5 V6.5 L3 8 H1 L0 6.5 V1.5 Z"/></g>
<g transform="translate(1422.5 455.5) rotate(-90) translate(0 -10) scale(1.2500 1.2500)" fill="none" stroke="#ffffff" stroke-width="1" vector-effect="non-scaling-stroke" stroke-linecap="square"><path vector-effect="non-scaling-stroke" transform="translate(0.00 0)" d="M3 8 V0 L0 5.5 H4.3"/><path vector-effect="non-scaling-stroke" transform="translate(6.60 0)" d="M0 1.5 L1 0 H3 L4 1.2 V3 L0 8 H4"/><path vector-effect="non-scaling-stroke" transform="translate(12.90 0)" d="M1 0 H3 L4 1.5 V6.5 L3 8 H1 L0 6.5 V1.5 Z"/><path vector-effect="non-scaling-stroke" transform="translate(19.20 0)" d="M1 0 H3 L4 1.5 V6.5 L3 8 H1 L0 6.5 V1.5 Z"/></g>
<g transform="translate(1422.5 558.5) rotate(-90) translate(0 -10) scale(1.2069 1.2500)" fill="none" stroke="#ffffff" stroke-width="1" vector-effect="non-scaling-stroke" stroke-linecap="square"><path vector-effect="non-scaling-stroke" transform="translate(0.00 0)" d="M3 8 V0 L0 5.5 H4.3"/><path vector-effect="non-scaling-stroke" transform="translate(6.60 0)" d="M0 1.5 L1 0 H3 L4 1.2 V3 L0 8 H4"/><path vector-effect="non-scaling-stroke" transform="translate(12.90 0)" d="M1 0 H3 L4 1.5 V6.5 L3 8 H1 L0 6.5 V1.5 Z"/><path vector-effect="non-scaling-stroke" transform="translate(19.20 0)" d="M1 0 H3 L4 1.5 V6.5 L3 8 H1 L0 6.5 V1.5 Z"/></g>
<g transform="translate(1422.5 699.5) rotate(-90) translate(0 -10) scale(1.1790 1.2500)" fill="none" stroke="#ffffff" stroke-width="1" vector-effect="non-scaling-stroke" stroke-linecap="square"><path vector-effect="non-scaling-stroke" transform="translate(0.00 0)" d="M0 0 H4 L1.5 8"/><path vector-effect="non-scaling-stroke" transform="translate(6.30 0)" d="M0 1.5 L1 0 H3 L4 1.2 V3 L0 8 H4"/><path vector-effect="non-scaling-stroke" transform="translate(12.60 0)" d="M1 0 H3 L4 1.5 V6.5 L3 8 H1 L0 6.5 V1.5 Z"/><path vector-effect="non-scaling-stroke" transform="translate(18.90 0)" d="M1 0 H3 L4 1.5 V6.5 L3 8 H1 L0 6.5 V1.5 Z"/></g>
<g transform="translate(1422.5 797.5) rotate(-90) translate(0 -10) scale(1.3253 1.2500)" fill="none" stroke="#ffffff" stroke-width="1" vector-effect="non-scaling-stroke" stroke-linecap="square"><path vector-effect="non-scaling-stroke" transform="translate(0.00 0)" d="M0 1 L1 0 H3 L4 1 V3 L3 4 H1.5 M3 4 L4 5 V7 L3 8 H1 L0 7"/><path vector-effect="non-scaling-stroke" transform="translate(6.30 0)" d="M1 0 H3 L4 1.5 V6.5 L3 8 H1 L0 6.5 V1.5 Z"/><path vector-effect="non-scaling-stroke" transform="translate(12.60 0)" d="M1 0 H3 L4 1.5 V6.5 L3 8 H1 L0 6.5 V1.5 Z"/></g>
<g transform="translate(1450.5 558.5) rotate(-90) translate(0 -10) scale(1.0870 1.2500)" fill="none" stroke="#ffffff" stroke-width="1" vector-effect="non-scaling-stroke" stroke-linecap="square"><path vector-effect="non-scaling-stroke" transform="translate(0.00 0)" d="M0.6 1.6 L2 0 V8"/><path vector-effect="non-scaling-stroke" transform="translate(4.70 0)" d="M0.5 8 H1.5 L4 5 V1 L3 0 H1 L0 1 V3 L1 4 H3 L4 3"/><path vector-effect="non-scaling-stroke" transform="translate(11.00 0)" d="M0 1.5 L1 0 H3 L4 1.2 V3 L0 8 H4"/><path vector-effect="non-scaling-stroke" transform="translate(17.30 0)" d="M1 0 H3 L4 1.5 V6.5 L3 8 H1 L0 6.5 V1.5 Z"/><path vector-effect="non-scaling-stroke" transform="translate(23.60 0)" d="M1 0 H3 L4 1.5 V6.5 L3 8 H1 L0 6.5 V1.5 Z"/></g>
<path d="M1470 294.5 L1481 305 L1492 294.5" fill="none" stroke="#00ff00" stroke-width="1"/>
<line x1="1470" y1="294.5" x2="1528" y2="294.5" stroke="#00ff00" stroke-width="1" />
<line x1="1481" y1="304.5" x2="1493" y2="304.5" stroke="#00ff00" stroke-width="1" />
<g transform="translate(1490.5 282.5) scale(1.1974 1.2500)" fill="none" stroke="#ffffff" stroke-width="1" vector-effect="non-scaling-stroke" stroke-linecap="square"><path vector-effect="non-scaling-stroke" transform="translate(0.00 0)" d="M0.6 1.6 L2 0 V8"/><path vector-effect="non-scaling-stroke" transform="translate(4.70 0)" d="M1 0 H3 L4 1 V3 L3 4 H1 L0 5 V7 L1 8 H3 L4 7 V5 L3 4 H1 L0 3 V1 Z"/><path vector-effect="non-scaling-stroke" transform="translate(11.00 0)" d="M0.5 7.3 V8"/><path vector-effect="non-scaling-stroke" transform="translate(14.30 0)" d="M0.5 8 H1.5 L4 5 V1 L3 0 H1 L0 1 V3 L1 4 H3 L4 3"/><path vector-effect="non-scaling-stroke" transform="translate(20.60 0)" d="M1 0 H3 L4 1.5 V6.5 L3 8 H1 L0 6.5 V1.5 Z"/><path vector-effect="non-scaling-stroke" transform="translate(26.90 0)" d="M1 0 H3 L4 1.5 V6.5 L3 8 H1 L0 6.5 V1.5 Z"/></g>
<g transform="translate(1502.5 264.5) scale(1.0053 0.8750)" fill="none" stroke="#ffffff" stroke-width="1" vector-effect="non-scaling-stroke" stroke-linecap="square"><path vector-effect="non-scaling-stroke" transform="translate(0.00 0)" d="M2 -0.5 Q0 4 2 8.5"/><path vector-effect="non-scaling-stroke" transform="translate(4.30 0)" d="M0 8 V0 H3 L4 1 V3 L3 4 H0 M2 4 L4 8"/><path vector-effect="non-scaling-stroke" transform="translate(10.60 0)" d="M4 0 H0 V8 M0 4 H3"/><path vector-effect="non-scaling-stroke" transform="translate(16.90 0)" d="M0 -0.5 Q2 4 0 8.5"/></g>
<path d="M1470 376.5 L1481 387 L1492 376.5" fill="none" stroke="#00ff00" stroke-width="1"/>
<line x1="1470" y1="376.5" x2="1528" y2="376.5" stroke="#00ff00" stroke-width="1" />
<line x1="1481" y1="386.5" x2="1493" y2="386.5" stroke="#00ff00" stroke-width="1" />
<g transform="translate(1490.5 364.5) scale(1.1974 1.2500)" fill="none" stroke="#ffffff" stroke-width="1" vector-effect="non-scaling-stroke" stroke-linecap="square"><path vector-effect="non-scaling-stroke" transform="translate(0.00 0)" d="M0.6 1.6 L2 0 V8"/><path vector-effect="non-scaling-stroke" transform="translate(4.70 0)" d="M4 0 H0.5 L0 3.5 H3 L4 4.5 V7 L3 8 H1 L0 7"/><path vector-effect="non-scaling-stroke" transform="translate(11.00 0)" d="M0.5 7.3 V8"/><path vector-effect="non-scaling-stroke" transform="translate(14.30 0)" d="M3.5 0 H1.5 L0 2 V7 L1 8 H3 L4 7 V5 L3 4 H1 L0 5"/><path vector-effect="non-scaling-stroke" transform="translate(20.60 0)" d="M1 0 H3 L4 1.5 V6.5 L3 8 H1 L0 6.5 V1.5 Z"/><path vector-effect="non-scaling-stroke" transform="translate(26.90 0)" d="M1 0 H3 L4 1.5 V6.5 L3 8 H1 L0 6.5 V1.5 Z"/></g>
<g transform="translate(1502.5 346.5) scale(1.0053 0.8750)" fill="none" stroke="#ffffff" stroke-width="1" vector-effect="non-scaling-stroke" stroke-linecap="square"><path vector-effect="non-scaling-stroke" transform="translate(0.00 0)" d="M2 -0.5 Q0 4 2 8.5"/><path vector-effect="non-scaling-stroke" transform="translate(4.30 0)" d="M4 0 V7 L3 8 H1 L0 7"/><path vector-effect="non-scaling-stroke" transform="translate(10.60 0)" d="M4 0 H0 V8 M0 4 H3"/><path vector-effect="non-scaling-stroke" transform="translate(16.90 0)" d="M0 -0.5 Q2 4 0 8.5"/></g>
<path d="M1470 480.5 L1481 491 L1492 480.5" fill="none" stroke="#00ff00" stroke-width="1"/>
<line x1="1470" y1="480.5" x2="1528" y2="480.5" stroke="#00ff00" stroke-width="1" />
<line x1="1481" y1="490.5" x2="1493" y2="490.5" stroke="#00ff00" stroke-width="1" />
<g transform="translate(1491.5 468.5) scale(1.2162 1.2500)" fill="none" stroke="#ffffff" stroke-width="1" vector-effect="non-scaling-stroke" stroke-linecap="square"><path vector-effect="non-scaling-stroke" transform="translate(0.00 0)" d="M0.6 1.6 L2 0 V8"/><path vector-effect="non-scaling-stroke" transform="translate(4.70 0)" d="M0.6 1.6 L2 0 V8"/><path vector-effect="non-scaling-stroke" transform="translate(9.40 0)" d="M0.5 7.3 V8"/><path vector-effect="non-scaling-stroke" transform="translate(12.70 0)" d="M3 8 V0 L0 5.5 H4.3"/><path vector-effect="non-scaling-stroke" transform="translate(19.30 0)" d="M1 0 H3 L4 1.5 V6.5 L3 8 H1 L0 6.5 V1.5 Z"/><path vector-effect="non-scaling-stroke" transform="translate(25.60 0)" d="M1 0 H3 L4 1.5 V6.5 L3 8 H1 L0 6.5 V1.5 Z"/></g>
<g transform="translate(1502.5 450.5) scale(1.0053 0.8750)" fill="none" stroke="#ffffff" stroke-width="1" vector-effect="non-scaling-stroke" stroke-linecap="square"><path vector-effect="non-scaling-stroke" transform="translate(0.00 0)" d="M2 -0.5 Q0 4 2 8.5"/><path vector-effect="non-scaling-stroke" transform="translate(4.30 0)" d="M0 1 L1 0 H3 L4 1 V3 L3 4 H1.5 M3 4 L4 5 V7 L3 8 H1 L0 7"/><path vector-effect="non-scaling-stroke" transform="translate(10.60 0)" d="M4 0 H0 V8 M0 4 H3"/><path vector-effect="non-scaling-stroke" transform="translate(16.90 0)" d="M0 -0.5 Q2 4 0 8.5"/></g>
<path d="M1470 585.5 L1481 596 L1492 585.5" fill="none" stroke="#00ff00" stroke-width="1"/>
<line x1="1470" y1="585.5" x2="1528" y2="585.5" stroke="#00ff00" stroke-width="1" />
<line x1="1481" y1="595.5" x2="1493" y2="595.5" stroke="#00ff00" stroke-width="1" />
<g transform="translate(1497.5 573.5) scale(1.1450 1.2500)" fill="none" stroke="#ffffff" stroke-width="1" vector-effect="non-scaling-stroke" stroke-linecap="square"><path vector-effect="non-scaling-stroke" transform="translate(0.00 0)" d="M0 0 H4 L1.5 8"/><path vector-effect="non-scaling-stroke" transform="translate(6.30 0)" d="M0.5 7.3 V8"/><path vector-effect="non-scaling-stroke" transform="translate(9.60 0)" d="M0 1.5 L1 0 H3 L4 1.2 V3 L0 8 H4"/><path vector-effect="non-scaling-stroke" transform="translate(15.90 0)" d="M1 0 H3 L4 1.5 V6.5 L3 8 H1 L0 6.5 V1.5 Z"/><path vector-effect="non-scaling-stroke" transform="translate(22.20 0)" d="M1 0 H3 L4 1.5 V6.5 L3 8 H1 L0 6.5 V1.5 Z"/></g>
<g transform="translate(1502.5 555.5) scale(1.0053 0.8750)" fill="none" stroke="#ffffff" stroke-width="1" vector-effect="non-scaling-stroke" stroke-linecap="square"><path vector-effect="non-scaling-stroke" transform="translate(0.00 0)" d="M2 -0.5 Q0 4 2 8.5"/><path vector-effect="non-scaling-stroke" transform="translate(4.30 0)" d="M0 1.5 L1 0 H3 L4 1.2 V3 L0 8 H4"/><path vector-effect="non-scaling-stroke" transform="translate(10.60 0)" d="M4 0 H0 V8 M0 4 H3"/><path vector-effect="non-scaling-stroke" transform="translate(16.90 0)" d="M0 -0.5 Q2 4 0 8.5"/></g>
<path d="M1470 762.5 L1481 773 L1492 762.5" fill="none" stroke="#00ff00" stroke-width="1"/>
<line x1="1470" y1="762.5" x2="1528" y2="762.5" stroke="#00ff00" stroke-width="1" />
<line x1="1481" y1="772.5" x2="1493" y2="772.5" stroke="#00ff00" stroke-width="1" />
<g transform="translate(1497.5 750.5) scale(1.1450 1.2500)" fill="none" stroke="#ffffff" stroke-width="1" vector-effect="non-scaling-stroke" stroke-linecap="square"><path vector-effect="non-scaling-stroke" transform="translate(0.00 0)" d="M1 0 H3 L4 1.5 V6.5 L3 8 H1 L0 6.5 V1.5 Z"/><path vector-effect="non-scaling-stroke" transform="translate(6.30 0)" d="M0.5 7.3 V8"/><path vector-effect="non-scaling-stroke" transform="translate(9.60 0)" d="M1 0 H3 L4 1.5 V6.5 L3 8 H1 L0 6.5 V1.5 Z"/><path vector-effect="non-scaling-stroke" transform="translate(15.90 0)" d="M1 0 H3 L4 1.5 V6.5 L3 8 H1 L0 6.5 V1.5 Z"/><path vector-effect="non-scaling-stroke" transform="translate(22.20 0)" d="M1 0 H3 L4 1.5 V6.5 L3 8 H1 L0 6.5 V1.5 Z"/></g>
<g transform="translate(1502.5 732.5) scale(1.0983 0.8750)" fill="none" stroke="#ffffff" stroke-width="1" vector-effect="non-scaling-stroke" stroke-linecap="square"><path vector-effect="non-scaling-stroke" transform="translate(0.00 0)" d="M2 -0.5 Q0 4 2 8.5"/><path vector-effect="non-scaling-stroke" transform="translate(4.30 0)" d="M0.6 1.6 L2 0 V8"/><path vector-effect="non-scaling-stroke" transform="translate(9.00 0)" d="M4 0 H0 V8 M0 4 H3"/><path vector-effect="non-scaling-stroke" transform="translate(15.30 0)" d="M0 -0.5 Q2 4 0 8.5"/></g>
<path d="M1470 792.5 L1481 782 L1492 792.5" fill="none" stroke="#00ff00" stroke-width="1"/>
<line x1="1470" y1="792.5" x2="1528" y2="792.5" stroke="#00ff00" stroke-width="1" />
<line x1="1481" y1="782.5" x2="1493" y2="782.5" stroke="#00ff00" stroke-width="1" />
<text x="1510" y="787" font-size="8" fill="#ffffff" font-family="Liberation Sans" text-anchor="start" textLength="11" lengthAdjust="spacingAndGlyphs" font-weight="bold">室外</text>
<g transform="translate(1489.5 794.5) scale(1.2063 1.2500)" fill="none" stroke="#ffffff" stroke-width="1" vector-effect="non-scaling-stroke" stroke-linecap="square"><path vector-effect="non-scaling-stroke" transform="translate(0.00 0)" d="M0 4.5 H3"/><path vector-effect="non-scaling-stroke" transform="translate(5.30 0)" d="M1 0 H3 L4 1.5 V6.5 L3 8 H1 L0 6.5 V1.5 Z"/><path vector-effect="non-scaling-stroke" transform="translate(11.60 0)" d="M0.5 7.3 V8"/><path vector-effect="non-scaling-stroke" transform="translate(14.90 0)" d="M0 1 L1 0 H3 L4 1 V3 L3 4 H1.5 M3 4 L4 5 V7 L3 8 H1 L0 7"/><path vector-effect="non-scaling-stroke" transform="translate(21.20 0)" d="M1 0 H3 L4 1.5 V6.5 L3 8 H1 L0 6.5 V1.5 Z"/><path vector-effect="non-scaling-stroke" transform="translate(27.50 0)" d="M1 0 H3 L4 1.5 V6.5 L3 8 H1 L0 6.5 V1.5 Z"/></g>
<path d="M1287 376.5 L1298 387 L1308 376.5" fill="none" stroke="#00ff00" stroke-width="1"/>
<line x1="1287" y1="376.5" x2="1345" y2="376.5" stroke="#00ff00" stroke-width="1" />
<line x1="1298" y1="386.5" x2="1308" y2="386.5" stroke="#00ff00" stroke-width="1" />
<g transform="translate(1307.5 364.5) scale(1.1650 1.2500)" fill="none" stroke="#ffffff" stroke-width="1" vector-effect="non-scaling-stroke" stroke-linecap="square"><path vector-effect="non-scaling-stroke" transform="translate(0.00 0)" d="M0.6 1.6 L2 0 V8"/><path vector-effect="non-scaling-stroke" transform="translate(4.70 0)" d="M4 0 H0.5 L0 3.5 H3 L4 4.5 V7 L3 8 H1 L0 7"/><path vector-effect="non-scaling-stroke" transform="translate(11.00 0)" d="M0.5 7.3 V8"/><path vector-effect="non-scaling-stroke" transform="translate(14.30 0)" d="M3.5 0 H1.5 L0 2 V7 L1 8 H3 L4 7 V5 L3 4 H1 L0 5"/><path vector-effect="non-scaling-stroke" transform="translate(20.60 0)" d="M1 0 H3 L4 1.5 V6.5 L3 8 H1 L0 6.5 V1.5 Z"/><path vector-effect="non-scaling-stroke" transform="translate(26.90 0)" d="M1 0 H3 L4 1.5 V6.5 L3 8 H1 L0 6.5 V1.5 Z"/></g>
<line x1="326" y1="963.5" x2="1346" y2="963.5" stroke="#00ff00" stroke-width="1" />
<line x1="526.5" y1="908" x2="526.5" y2="982" stroke="#00ff00" stroke-width="1" />
<path d="M523 966 L529 960" fill="none" stroke="#00ff00" stroke-width="1"/>
<line x1="774.5" y1="908" x2="774.5" y2="982" stroke="#00ff00" stroke-width="1" />
<path d="M771 966 L777 960" fill="none" stroke="#00ff00" stroke-width="1"/>
<line x1="1022.5" y1="908" x2="1022.5" y2="982" stroke="#00ff00" stroke-width="1" />
<path d="M1019 966 L1025 960" fill="none" stroke="#00ff00" stroke-width="1"/>
<line x1="1264.5" y1="908" x2="1264.5" y2="982" stroke="#00ff00" stroke-width="1" />
<path d="M1261 966 L1267 960" fill="none" stroke="#00ff00" stroke-width="1"/>
<line x1="1346.5" y1="909" x2="1346.5" y2="977" stroke="#00ff00" stroke-width="1" />
<line x1="1272.5" y1="965" x2="1272.5" y2="977" stroke="#00ff00" stroke-width="1" />
<g transform="translate(392.5 952.5) scale(1.2227 1.2500)" fill="none" stroke="#ffffff" stroke-width="1" vector-effect="non-scaling-stroke" stroke-linecap="square"><path vector-effect="non-scaling-stroke" transform="translate(0.00 0)" d="M0.5 8 H1.5 L4 5 V1 L3 0 H1 L0 1 V3 L1 4 H3 L4 3"/><path vector-effect="non-scaling-stroke" transform="translate(6.30 0)" d="M3.5 0 H1.5 L0 2 V7 L1 8 H3 L4 7 V5 L3 4 H1 L0 5"/><path vector-effect="non-scaling-stroke" transform="translate(12.60 0)" d="M1 0 H3 L4 1.5 V6.5 L3 8 H1 L0 6.5 V1.5 Z"/><path vector-effect="non-scaling-stroke" transform="translate(18.90 0)" d="M1 0 H3 L4 1.5 V6.5 L3 8 H1 L0 6.5 V1.5 Z"/></g>
<g transform="translate(633.5 952.5) scale(1.1594 1.2500)" fill="none" stroke="#ffffff" stroke-width="1" vector-effect="non-scaling-stroke" stroke-linecap="square"><path vector-effect="non-scaling-stroke" transform="translate(0.00 0)" d="M0.6 1.6 L2 0 V8"/><path vector-effect="non-scaling-stroke" transform="translate(4.70 0)" d="M1 0 H3 L4 1.5 V6.5 L3 8 H1 L0 6.5 V1.5 Z"/><path vector-effect="non-scaling-stroke" transform="translate(11.00 0)" d="M1 0 H3 L4 1.5 V6.5 L3 8 H1 L0 6.5 V1.5 Z"/><path vector-effect="non-scaling-stroke" transform="translate(17.30 0)" d="M1 0 H3 L4 1.5 V6.5 L3 8 H1 L0 6.5 V1.5 Z"/><path vector-effect="non-scaling-stroke" transform="translate(23.60 0)" d="M1 0 H3 L4 1.5 V6.5 L3 8 H1 L0 6.5 V1.5 Z"/></g>
<g transform="translate(880.5 952.5) scale(1.1594 1.2500)" fill="none" stroke="#ffffff" stroke-width="1" vector-effect="non-scaling-stroke" stroke-linecap="square"><path vector-effect="non-scaling-stroke" transform="translate(0.00 0)" d="M0.6 1.6 L2 0 V8"/><path vector-effect="non-scaling-stroke" transform="translate(4.70 0)" d="M1 0 H3 L4 1.5 V6.5 L3 8 H1 L0 6.5 V1.5 Z"/><path vector-effect="non-scaling-stroke" transform="translate(11.00 0)" d="M1 0 H3 L4 1.5 V6.5 L3 8 H1 L0 6.5 V1.5 Z"/><path vector-effect="non-scaling-stroke" transform="translate(17.30 0)" d="M1 0 H3 L4 1.5 V6.5 L3 8 H1 L0 6.5 V1.5 Z"/><path vector-effect="non-scaling-stroke" transform="translate(23.60 0)" d="M1 0 H3 L4 1.5 V6.5 L3 8 H1 L0 6.5 V1.5 Z"/></g>
<g transform="translate(1315.5 952.5) scale(1.0000 1.2500)" fill="none" stroke="#ffffff" stroke-width="1" vector-effect="non-scaling-stroke" stroke-linecap="square"><path vector-effect="non-scaling-stroke" transform="translate(0.00 0)" d="M1 0 H3 L4 1.5 V6.5 L3 8 H1 L0 6.5 V1.5 Z"/></g>
<path d="M1920 437.5 H1800.5 V771.5 H1920" fill="none" stroke="#80a0ff" stroke-width="1"/>
<path d="M1920 615.5 H1859.5 V771" fill="none" stroke="#80a0ff" stroke-width="1"/>
<path d="M1920 631 L1860 692 L1920 756" fill="none" stroke="#80a0ff" stroke-width="1"/>
<line x1="1830" y1="585.5" x2="1920" y2="585.5" stroke="#00ff00" stroke-width="1" />
<path d="M1830 585.5 L1836 583 V588z M1836 583.5 H1841 V587.5 H1836" fill="none" stroke="#00ff00" stroke-width="1"/>
<line x1="1800" y1="802.5" x2="1920" y2="802.5" stroke="#00ff00" stroke-width="1" />
<line x1="1800" y1="832.5" x2="1920" y2="832.5" stroke="#00ff00" stroke-width="1" />
<line x1="1800.5" y1="771" x2="1800.5" y2="845" stroke="#00ff00" stroke-width="1" />
<line x1="1859.5" y1="790" x2="1859.5" y2="815" stroke="#00ff00" stroke-width="1" />
<g transform="translate(1819.5 791.5) scale(1.1446 1.2500)" fill="none" stroke="#ffffff" stroke-width="1" vector-effect="non-scaling-stroke" stroke-linecap="square"><path vector-effect="non-scaling-stroke" transform="translate(0.00 0)" d="M1 0 H3 L4 1 V3 L3 4 H1 L0 5 V7 L1 8 H3 L4 7 V5 L3 4 H1 L0 3 V1 Z"/><path vector-effect="non-scaling-stroke" transform="translate(6.30 0)" d="M1 0 H3 L4 1.5 V6.5 L3 8 H1 L0 6.5 V1.5 Z"/><path vector-effect="non-scaling-stroke" transform="translate(12.60 0)" d="M1 0 H3 L4 1.5 V6.5 L3 8 H1 L0 6.5 V1.5 Z"/></g>
<g transform="translate(1883.5 791.5) scale(1.1737 1.2500)" fill="none" stroke="#ffffff" stroke-width="1" vector-effect="non-scaling-stroke" stroke-linecap="square"><path vector-effect="non-scaling-stroke" transform="translate(0.00 0)" d="M0.6 1.6 L2 0 V8"/><path vector-effect="non-scaling-stroke" transform="translate(4.70 0)" d="M1 0 H3 L4 1.5 V6.5 L3 8 H1 L0 6.5 V1.5 Z"/><path vector-effect="non-scaling-stroke" transform="translate(11.00 0)" d="M1 0 H3 L4 1.5 V6.5 L3 8 H1 L0 6.5 V1.5 Z"/><path vector-effect="non-scaling-stroke" transform="translate(17.30 0)" d="M1 0 H3 L4 1.5 V6.5 L3 8 H1 L0 6.5 V1.5 Z"/></g>
<g transform="translate(1871.5 876.5) scale(1.7705 1.8750)" fill="none" stroke="#ffffff" stroke-width="1" vector-effect="non-scaling-stroke" stroke-linecap="square"><path vector-effect="non-scaling-stroke" transform="translate(0.00 0)" d="M0 0 H4 M2 0 V8"/><path vector-effect="non-scaling-stroke" transform="translate(6.30 0)" d="M0 0 V8 H4"/><path vector-effect="non-scaling-stroke" transform="translate(12.60 0)" d="M0 8 V0 L2.5 5 L5 0 V8"/><path vector-effect="non-scaling-stroke" transform="translate(19.90 0)" d="M3 8 V0 L0 5.5 H4.3"/><path vector-effect="non-scaling-stroke" transform="translate(26.50 0)" d="M0 1.5 L1 0 H3 L4 1.2 V3 L0 8 H4"/></g>
<line x1="1869" y1="898.5" x2="1920" y2="898.5" stroke="#00ff00" stroke-width="1" /></svg>
<div class="abs" style="left:929px;top:929px;width:387px;height:37px;background:#646464;border:1px solid #7a7a7a"></div>
<svg class="abs" style="left:936px;top:936px" width="22" height="22"><g fill="none" stroke="#ddd" stroke-width="1.3"><rect x="2" y="2" width="7" height="7" rx="2"/><rect x="2" y="12" width="7" height="7" rx="2"/><rect x="12" y="12" width="7" height="7" rx="2"/><rect x="12" y="2" width="7" height="7" rx="2" transform="rotate(45 15.5 5.5)"/></g></svg>
<div class="abs" style="left:967px;top:937px;width:1px;height:21px;background:#7a7a7a"></div>
<div class="abs" style="left:970px;top:938px;font-size:12px;color:#eee;line-height:18px">标注分类</div>
<div class="abs" style="left:1025px;top:933px;width:150px;height:28px;background:#5e5e5e;border:1px solid #1e1e1e"></div>
<div class="abs" style="left:1031px;top:940px;width:14px;height:14px;background:#e8540a;border:1px solid #333"></div>
<div class="abs" style="left:1048px;top:938px;font-size:12px;color:#eee;line-height:18px">未分类</div>
<svg class="abs" style="left:1157px;top:943px" width="14" height="10"><path d="M1 2 H13 L7 9z" fill="#fff"/></svg>
<div class="abs" style="left:1179px;top:937px;width:1px;height:21px;background:#7a7a7a"></div>
<svg class="abs" style="left:1186px;top:936px" width="128" height="24"><g fill="none" stroke="#ddd" stroke-width="1.4" stroke-linejoin="round">
<path d="M3 6 V21 H17"/><path d="M6 4 H13 M6 4 V18 H20 V11"/><path d="M10 14 L20 4 L22 6 L12 16 L9 17z"/>
<path d="M45 3 V21 M36 12 H54 M42 6 L45 3 L48 6 M42 18 L45 21 L48 18 M39 9 L36 12 L39 15 M51 9 L54 12 L51 15"/>
<rect x="69" y="9" width="11" height="12" rx="2.5"/><path d="M73 9 V6 q0 -3 3 -3 H84 q3 0 3 3 V14 q0 3 -3 3 H80"/>
<rect x="102" y="6" width="12" height="15" rx="2"/><path d="M104 6 V3 H112 V6"/><rect x="110" y="12" width="10" height="10" fill="#646464"/>
</g></svg>

<div class="abs" style="left:1599px;top:102px;width:321px;height:90px;background:#fffde6;border-top:1px solid #ccc"></div>
<div class="abs" style="left:1903px;top:102px;width:16px;height:15px;background:#f3f3f0;border-right:1px solid #777;border-bottom:1px solid #777"></div>
<svg class="abs" style="left:1905px;top:104px" width="12" height="12"><path d="M2 2 L10 10 M10 2 L2 10" stroke="#444" stroke-width="1"/></svg>
<div class="abs" style="left:1609px;top:110px;width:310px;font-size:12px;line-height:17px;color:#111;white-space:nowrap">若打开图纸后出现显示异常问题（绿色条纹，黑屏，闪<br>烁等），您可以尝试<span style="color:#0000ee;text-decoration:underline">点击此处</span>切换显示模式来解决。若<br>无问题请直接忽略并关闭本提示。</div>
<div class="abs" style="left:1609px;top:168px;font-size:12px;line-height:17px;color:#111;white-space:nowrap"><span style="color:#0000ee;text-decoration:underline">点击此处</span>查看更多详细教程。</div>
<div class="abs" style="left:1856px;top:168px;font-size:12px;line-height:17px;color:#888;text-decoration:underline;white-space:nowrap">不再提示</div>


<div class="abs" style="left:325px;top:982px;width:1595px;height:21px;background:#f0f0f0;border-bottom:1px solid #000"></div>
<div class="abs" style="left:325px;top:982px;width:1px;height:21px;background:#000"></div>
<div class="abs" style="left:1919px;top:982px;width:1px;height:21px;background:#000"></div>
<div class="abs" style="left:326px;top:982px;width:1593px;height:1px;background:#fff"></div>
<svg class="abs" style="left:325px;top:981px" width="210" height="22">
<path d="M1 1 L9 18 q2 3 6 3 H60 q4 0 5 -3 L73 1z" fill="#000"/>
<path d="M73 1 L67 16 q1 4 5 5 H123 q4 0 6 -4 L137 1" fill="#fff" stroke="#222" stroke-width="1"/>
<path d="M137 1 L131 1 L138 16 q2 5 6 5 H187 q4 0 5 -4 L200 1" fill="#fff" stroke="#222" stroke-width="1"/>
</svg>
<div class="abs" style="left:348px;top:984px;font-size:12px;color:#fff;line-height:16px">模型</div>
<div class="abs" style="left:411px;top:984px;font-size:12px;color:#000;line-height:16px">布局1</div>
<div class="abs" style="left:475px;top:984px;font-size:12px;color:#000;line-height:16px">布局2</div>


<div class="abs" style="left:0;top:1003px;width:1920px;height:30px;background:linear-gradient(#f1efec,#ebe6e1);border-bottom:1px solid #c8ccd4"></div>
<div class="abs" style="left:7px;top:1010px;font-size:12px;font-family:'Liberation Mono',monospace;color:#111;line-height:16px;white-space:nowrap;transform:scaleX(0.835);transform-origin:0 0">x = 1047214 y = 361952</div>
<div class="abs" style="left:337px;top:1006px;width:1px;height:24px;background:#d6d3cf"></div>
<div class="abs" style="left:510px;top:1006px;width:1px;height:24px;background:#d6d3cf"></div>
<div class="abs" style="left:515px;top:1010px;font-size:12px;color:#111;line-height:16px;white-space:nowrap">模型中的标注比例<span style="font-family:'Liberation Mono',monospace">:1</span></div>
<div class="abs" style="left:1852px;top:1006px;width:1px;height:24px;background:#d6d3cf"></div>
<div class="abs" style="left:1886px;top:1006px;width:1px;height:24px;background:#d6d3cf"></div>
<div class="abs" style="left:1862px;top:1009px;width:17px;height:17px;background:#1a98e0;border-radius:2px;color:#fff;font-size:7px;line-height:17px;text-align:center;font-weight:bold">P+D</div>
<svg class="abs" style="left:1896px;top:1009px" width="18" height="18"><rect x="1.5" y="1.5" width="15" height="15" rx="1.5" fill="none" stroke="#1a98e0" stroke-width="1.2"/><path d="M4 12.5 h10" stroke="#1a98e0" stroke-width="1.6"/></svg>


<div class="abs" style="left:0;top:1033px;width:1920px;height:47px;background:linear-gradient(90deg,#d9e2f1 0%,#e3eaf6 25%,#e2e9f7 50%,#dfe6f6 75%,#e4ebf7 100%)"></div>
<svg class="abs" style="left:18px;top:1037px" width="34" height="36">
<circle cx="13" cy="21" r="9" fill="#f39a1e"/><path d="M12 26 q-5 0 -4 -4 q1 -3 5 -2 q2 -4 6 -2 q4 1 3 5 q3 1 1 3z" fill="#dfe8f4" stroke="#b9c9dd" stroke-width="0.6"/>
<circle cx="20" cy="9" r="7" fill="#c42b1c"/><text x="20" y="13" font-size="10" fill="#fff" text-anchor="middle" font-family="Liberation Sans">1</text>
</svg>
<div class="abs" style="left:50px;top:1039px;font-size:12px;color:#222;line-height:16px">35°C</div>
<div class="abs" style="left:50px;top:1055px;font-size:12px;color:#333;line-height:16px">大部晴朗</div>
<svg class="abs" style="left:616px;top:1043px" width="26" height="26"><rect x="1" y="1" width="11" height="11" fill="#1e90e8"/><rect x="13" y="1" width="11" height="11" fill="#2aa4f0"/><rect x="1" y="13" width="11" height="11" fill="#1777d4"/><rect x="13" y="13" width="11" height="11" fill="#1e8fe6"/></svg>
<div class="abs" style="left:654px;top:1041px;width:217px;height:31px;border-radius:16px;background:#f9fbfe;border:1px solid #d9dfe8"></div>
<svg class="abs" style="left:663px;top:1047px" width="18" height="18"><circle cx="7" cy="7" r="5.5" fill="none" stroke="#222" stroke-width="1.6"/><path d="M11 11 L16 16" stroke="#222" stroke-width="1.8"/></svg>
<div class="abs" style="left:690px;top:1047px;font-size:13px;color:#555;line-height:18px">搜索</div>
<svg class="abs" style="left:823px;top:1041px" width="44" height="30"><ellipse cx="22" cy="26" rx="20" ry="3" fill="#e8c79a"/><path d="M6 8 l6 -3 q16 4 22 4 l4 3 l-2 3 l-2 10 h-2 l-1 -9 q-8 2 -14 0 l-2 9 h-2 l-1 -10 q-4 -2 -6 -7z" fill="#eee" stroke="#333" stroke-width="0.8"/><path d="M14 8 l2 6 M19 9 l2 7 M24 9 l1 7 M29 9 l1 6" stroke="#333" stroke-width="1.2"/></svg>
<svg class="abs" style="left:883px;top:1043px" width="26" height="26"><rect x="9" y="3" width="13" height="13" fill="#f6f6f6" stroke="#ccc"/><rect x="4" y="9" width="13" height="13" fill="#222"/></svg>
<svg class="abs" style="left:928px;top:1042px" width="28" height="28"><circle cx="14" cy="14" r="12" fill="#1a8fd8"/><path d="M4 16 q2 -10 12 -10 q8 0 9 7 q-1 4 -7 4 q-4 0 -5 -3 q-4 2 -3 6 q1 4 7 5 q-10 2 -13 -9z" fill="#5fd18a"/><path d="M10 15 q2 -5 8 -4 q4 1 5 3 q-3 1 -6 1 q-4 0 -7 0z" fill="#fff" opacity="0.9"/></svg>
<div class="abs" style="left:938px;top:1071px;width:6px;height:3px;border-radius:2px;background:#6b6b6b"></div>
<svg class="abs" style="left:971px;top:1043px" width="28" height="26"><path d="M2 4 h9 l2 3 h13 v16 H2z" fill="#f3c33a"/><rect x="2" y="9" width="24" height="14" fill="#fbd453"/><rect x="7" y="16" width="14" height="5" fill="#2a7fd4"/></svg>
<div class="abs" style="left:982px;top:1071px;width:6px;height:3px;border-radius:2px;background:#6b6b6b"></div>
<svg class="abs" style="left:1015px;top:1042px" width="28" height="28"><path d="M9 7 q0 -5 5 -5 q5 0 5 5" fill="none" stroke="#1f5fa8" stroke-width="2"/><rect x="3" y="7" width="22" height="19" rx="3" fill="#1f5fa8"/><rect x="9" y="12" width="4" height="4" fill="#f35325"/><rect x="14" y="12" width="4" height="4" fill="#81bc06"/><rect x="9" y="17" width="4" height="4" fill="#05a6f0"/><rect x="14" y="17" width="4" height="4" fill="#ffba08"/></svg>
<svg class="abs" style="left:1058px;top:1043px" width="28" height="26"><ellipse cx="11" cy="11" rx="10" ry="8" fill="#3cc44a"/><ellipse cx="18" cy="16" rx="8" ry="6.5" fill="#e9f1e9" stroke="#c9d9c9" stroke-width="0.6"/><circle cx="8" cy="10" r="1.3" fill="#fff"/><circle cx="14" cy="10" r="1.3" fill="#fff"/><circle cx="16" cy="16" r="1" fill="#888"/><circle cx="21" cy="16" r="1" fill="#888"/></svg>
<svg class="abs" style="left:1103px;top:1042px" width="28" height="28"><circle cx="14" cy="14" r="12" fill="#222" stroke="#d44" stroke-width="1.5"/><path d="M11 8 L20 14 L11 20z" fill="#fff"/></svg>
<div class="abs" style="left:1114px;top:1071px;width:6px;height:3px;border-radius:2px;background:#6b6b6b"></div>
<div class="abs" style="left:1148px;top:1043px;width:26px;height:26px;border-radius:4px;background:#2b8ff0;color:#fff;font-size:19px;line-height:26px;text-align:center">预</div>
<div class="abs" style="left:1158px;top:1071px;width:6px;height:3px;border-radius:2px;background:#6b6b6b"></div>
<svg class="abs" style="left:1191px;top:1044px" width="28" height="24"><path d="M2 4 L8 20 L14 8 L20 20 L26 4" fill="none" stroke="#e0222a" stroke-width="4" stroke-linejoin="round"/></svg>
<div class="abs" style="left:1202px;top:1071px;width:6px;height:3px;border-radius:2px;background:#6b6b6b"></div>
<svg class="abs" style="left:1235px;top:1043px" width="28" height="26"><rect x="1" y="1" width="25" height="24" rx="5" fill="#bfe5fa"/><path d="M5 6 H22 V11 H16 V22 H11 V11 H5z" fill="#1aa0e8"/></svg>
<div class="abs" style="left:1246px;top:1071px;width:6px;height:3px;border-radius:2px;background:#6b6b6b"></div>
<div class="abs" style="left:1273px;top:1037px;width:40px;height:40px;border-radius:4px;background:#eef2f9;border:1px solid #dde3ec"></div>
<svg class="abs" style="left:1280px;top:1043px" width="26" height="26"><rect x="1" y="1" width="24" height="24" rx="2" fill="#1b4f96" stroke="#555" stroke-width="1"/><text x="13" y="17" font-size="10" fill="#dce8ff" text-anchor="middle" font-weight="bold" font-family="Liberation Sans">CAD</text></svg>
<div class="abs" style="left:1285px;top:1071px;width:16px;height:3px;border-radius:2px;background:#1a6fd8"></div>
<svg class="abs" style="left:1696px;top:1049px" width="16" height="12"><path d="M2 9 L8 3 L14 9" fill="none" stroke="#222" stroke-width="1.3"/></svg>
<svg class="abs" style="left:1727px;top:1045px" width="20" height="20"><path d="M5 13 q-4 0 -4 -4 q0 -4 4 -4 q1 -4 6 -4 q5 0 6 5 q2 1 2 3" fill="#666"/><circle cx="13" cy="13" r="5" fill="#1663c7"/><path d="M13 11 v5" stroke="#fff" stroke-width="1.5"/><circle cx="13" cy="9.5" r="0.9" fill="#fff"/></svg>
<div class="abs" style="left:1760px;top:1046px;font-size:15px;color:#111;line-height:18px">中</div>
<svg class="abs" style="left:1790px;top:1046px" width="20" height="18"><path d="M2 7 q8 -7 16 0 M5 10 q5 -5 10 0 M8 13 q2 -2 4 0" fill="none" stroke="#222" stroke-width="1.4"/><circle cx="10" cy="15" r="1.2" fill="#222"/></svg>
<svg class="abs" style="left:1815px;top:1046px" width="20" height="18"><path d="M2 6 h3 l4 -4 v14 l-4 -4 h-3z" fill="none" stroke="#222" stroke-width="1.2"/><path d="M12 6 q2 3 0 6 M14 4 q4 5 0 10 M16 2 q6 7 0 14" fill="none" stroke="#222" stroke-width="1.1"/></svg>
<div class="abs" style="left:1860px;top:1040px;font-size:12px;color:#111;line-height:16px;text-align:right;width:44px">15:46</div>
<div class="abs" style="left:1844px;top:1056px;font-size:12px;color:#111;line-height:16px;text-align:right;width:60px">2023/7/24</div>

</body></html>
